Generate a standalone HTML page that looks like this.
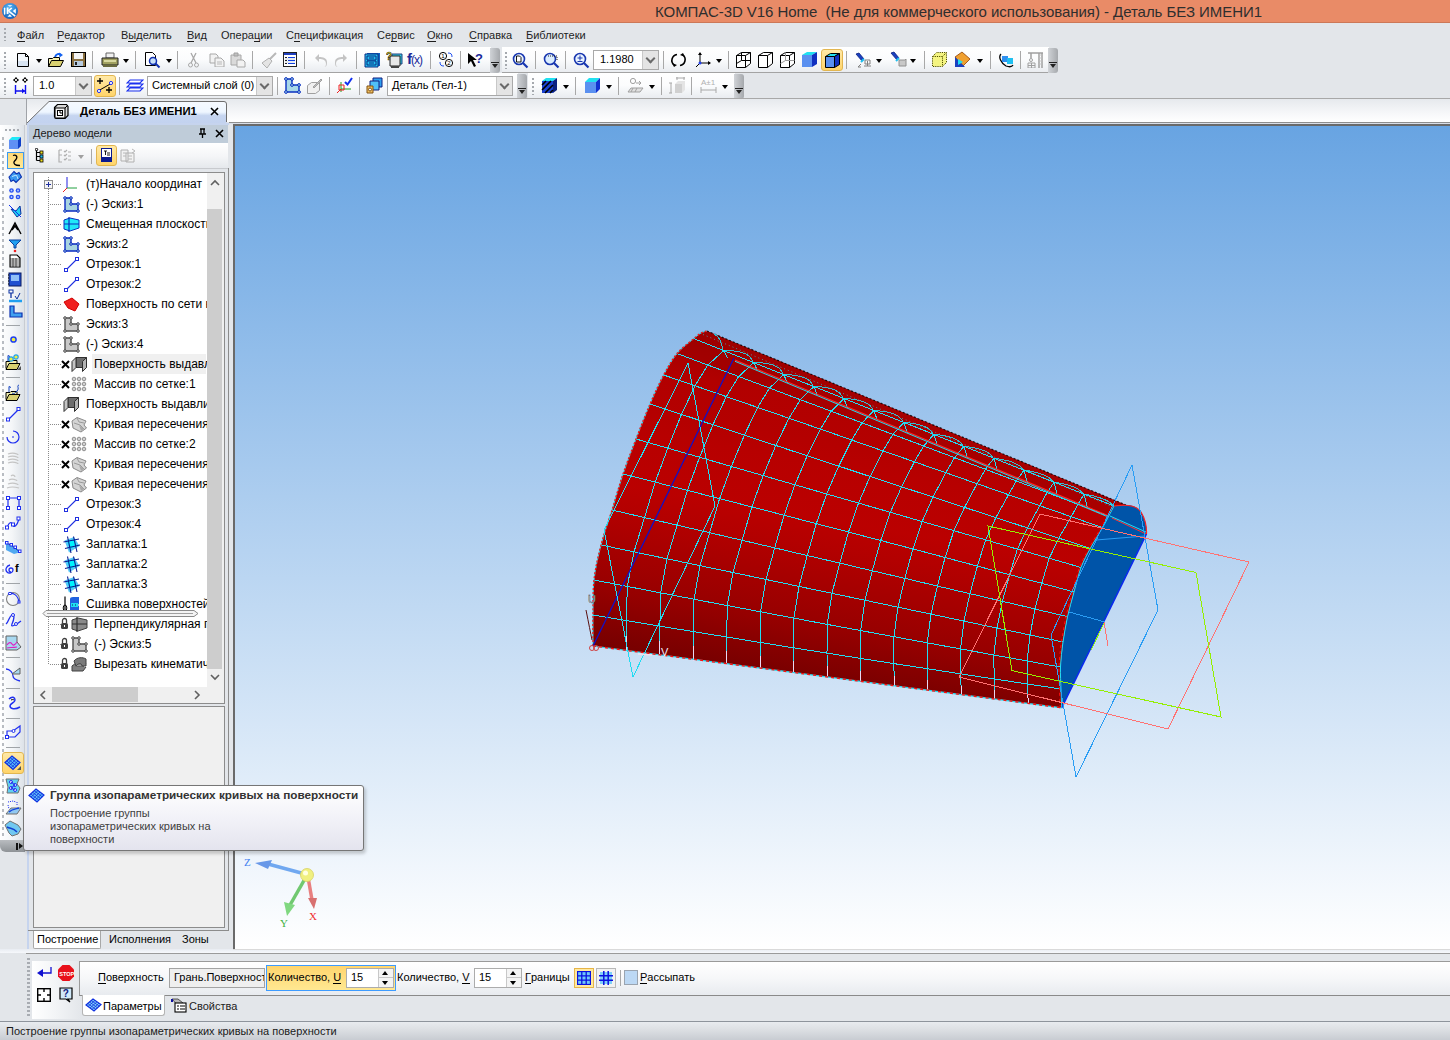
<!DOCTYPE html>
<html><head><meta charset="utf-8">
<style>
*{margin:0;padding:0;box-sizing:border-box}
html,body{width:1450px;height:1040px;overflow:hidden;background:#E3E6EA;font-family:"Liberation Sans",sans-serif;font-size:11px;color:#000}
.a{position:absolute}
.t{position:absolute;white-space:nowrap;line-height:13px}
.m{position:absolute;top:29px;line-height:13px;font-size:11px;color:#1E1E1E;white-space:nowrap}
u{text-decoration:none;border-bottom:1px solid currentColor;display:inline-block;line-height:11px}
.sep{position:absolute;width:1px;height:18px;background:#A8A8A8}
.tb{position:absolute;height:26px;background:linear-gradient(#FFFFFF 0%,#FBFCFD 50%,#E9ECF0 100%);border-bottom:1px solid #A3A3A3}
.grip{position:absolute;width:2px;height:17px;background:repeating-linear-gradient(#A5A9AE 0 2px,transparent 2px 4px)}
.ovf{position:absolute;width:10px;background:linear-gradient(90deg,#D0D3D7,#A5A8AC);border-radius:0 3px 3px 0}
.dd{position:absolute;width:0;height:0;border-left:3.5px solid transparent;border-right:3.5px solid transparent;border-top:4px solid #000}
.combo{position:absolute;height:19px;background:#fff;border:1px solid #A9A9A9}
.cbtn{position:absolute;right:0;top:0;width:16px;height:17px;background:#E4E4E4;border-left:1px solid #C8C8C8}
.cbtn:after{content:"";position:absolute;left:4px;top:4px;width:5px;height:5px;border-right:2px solid #6A6A6A;border-bottom:2px solid #6A6A6A;transform:rotate(45deg)}
.sel{position:absolute;background:linear-gradient(#FFE9A8,#FFD46A);border:1px solid #E2B650;border-radius:3px}
.ti{position:absolute;left:86px;font-size:12px;line-height:14px;white-space:nowrap;color:#000}
.dot{position:absolute;height:1px;background:repeating-linear-gradient(90deg,#8A8A8A 0 1px,transparent 1px 2px)}
</style></head><body>
<!-- TITLE -->
<div class="a" style="left:0;top:0;width:1450px;height:23px;background:#E98B67"></div>
<div class="a" style="left:0;top:22px;width:1450px;height:1px;background:#CC7858"></div>
<svg class="a" style="left:0;top:0" width="22" height="22"><defs><radialGradient id="lg" cx="0.45" cy="0.3" r="0.75"><stop offset="0" stop-color="#58B8F8"/><stop offset="1" stop-color="#0E5CB8"/></radialGradient></defs><circle cx="10" cy="11" r="8" fill="url(#lg)"/><path d="M4.6 8.2v5.8" stroke="#fff" stroke-width="1.4" stroke-linecap="round"/><path d="M7.6 7.5v6.5" stroke="#fff" stroke-width="1.8"/><path d="M8 11.2L11.8 8" stroke="#fff" stroke-width="1.6"/><path d="M9 11.3L15.2 16.2" stroke="#fff" stroke-width="1.6"/><path d="M7.5 5.2h5l-2.5 1.6z" fill="#fff"/><path d="M15.8 8.5v5.2l-3-2.6z" fill="#fff"/><path d="M7.5 16.8h4.5l-2.2-2.6z" fill="#fff"/></svg>
<div class="t" style="left:655px;top:3px;font-size:15px;line-height:18px;color:#2E2E2E;letter-spacing:-0.05px">КОМПАС-3D V16 Home&nbsp; (Не для коммерческого использования) - Деталь БЕЗ ИМЕНИ1</div>
<!-- MENU -->
<div class="a" style="left:0;top:23px;width:1450px;height:24px;background:#E3E6EA"></div>
<div class="grip" style="left:4px;top:28px;height:13px"></div>
<div class="m" style="left:17px"><u>Ф</u>айл</div>
<div class="m" style="left:57px"><u>Р</u>едактор</div>
<div class="m" style="left:121px">В<u>ы</u>делить</div>
<div class="m" style="left:187px"><u>В</u>ид</div>
<div class="m" style="left:221px">Опера<u>ц</u>ии</div>
<div class="m" style="left:286px">С<u>п</u>ецификация</div>
<div class="m" style="left:377px">Се<u>р</u>вис</div>
<div class="m" style="left:427px"><u>О</u>кно</div>
<div class="m" style="left:469px"><u>С</u>правка</div>
<div class="m" style="left:526px"><u>Б</u>иблиотеки</div>
<!-- TOOLBAR ROW 1 -->
<div class="tb" style="left:0;top:47px;width:491px;border-radius:0 0 0 0"></div>
<div class="ovf" style="left:490px;top:48px;height:25px"></div>
<div class="dd" style="left:491.5px;top:64px;border-top-color:#222"></div><div class="a" style="left:491px;top:62px;width:8px;height:1px;background:#222"></div>
<div class="grip" style="left:4px;top:52px"></div>
<!-- new -->
<svg class="a" style="left:16px;top:52px" width="14" height="16"><path d="M1.5 1.5h8l3 3v10h-11z" fill="#F4F8FC" stroke="#000"/><path d="M9.5 1.5v3h3" fill="none" stroke="#000"/><path d="M2 9h10v5H2z" fill="#D8E4F2"/></svg>
<div class="dd" style="left:36px;top:59px"></div>
<!-- open -->
<svg class="a" style="left:47px;top:51px" width="17" height="17"><path d="M1.5 7.5h4l1-1h6v9h-11z" fill="#F4F0B0" stroke="#000"/><path d="M1.5 15.5l3-6h12l-3 6z" fill="#D8D070" stroke="#000"/><path d="M8 6c1-3 4-4 6-2" stroke="#1060F0" stroke-width="2" fill="none"/><path d="M12 1.5l4 2.5-3.5 2.5z" fill="#1060F0"/></svg>
<!-- save -->
<svg class="a" style="left:71px;top:52px" width="15" height="16"><rect x="0.5" y="0.5" width="14" height="14" fill="#8A7040" stroke="#000"/><rect x="3" y="1" width="9" height="6" fill="#F4F4F4"/><rect x="3" y="9" width="9" height="5" fill="#B8CCE0"/><rect x="4" y="10" width="2" height="3" fill="#222"/></svg>
<div class="sep" style="left:92px;top:51px"></div>
<!-- print -->
<svg class="a" style="left:101px;top:52px" width="18" height="16"><path d="M5 1h8v5H5z" fill="#F0F0F0" stroke="#666"/><path d="M1 6h16v7H1z" fill="#A0A060" stroke="#222"/><path d="M2 13h14v2H2z" fill="#6A6A40"/><rect x="3" y="8" width="12" height="2" fill="#D8D8A0"/></svg>
<div class="dd" style="left:123px;top:59px"></div>
<div class="sep" style="left:135px;top:51px"></div>
<!-- preview -->
<svg class="a" style="left:144px;top:51px" width="18" height="18"><path d="M1.5 1.5h7l3 3v10h-10z" fill="#fff" stroke="#000"/><circle cx="9" cy="10" r="3.5" fill="#C8E0F8" stroke="#1030B0" stroke-width="1.5"/><path d="M11.5 12.5l4 4" stroke="#1030B0" stroke-width="2"/></svg>
<div class="dd" style="left:166px;top:59px"></div>
<div class="sep" style="left:177px;top:51px"></div>
<!-- cut copy paste (gray) -->
<svg class="a" style="left:188px;top:52px" width="11" height="16"><path d="M3 1l5 10M8 1L3 11" stroke="#A8A8A8" stroke-width="1.3"/><circle cx="2.5" cy="13" r="2" fill="none" stroke="#A8A8A8"/><circle cx="8.5" cy="13" r="2" fill="none" stroke="#A8A8A8"/></svg>
<svg class="a" style="left:209px;top:53px" width="16" height="14"><path d="M1 1h6l2 2v7H1z" fill="#F2F2F2" stroke="#A8A8A8"/><path d="M6 5h6l3 3v6H6z" fill="#F2F2F2" stroke="#A8A8A8"/><path d="M8 9h5M8 11h5" stroke="#B8B8B8"/></svg>
<svg class="a" style="left:230px;top:52px" width="16" height="16"><path d="M1 3h10v10H1z" fill="#DADADA" stroke="#A8A8A8"/><path d="M4 1h4v3H4z" fill="#C0C0C0" stroke="#A0A0A0"/><path d="M7 8h6l2 2v5H7z" fill="#F2F2F2" stroke="#A8A8A8"/></svg>
<div class="sep" style="left:252px;top:51px"></div>
<svg class="a" style="left:260px;top:52px" width="17" height="17"><path d="M16 1l-6 6" stroke="#B8B8B8" stroke-width="2"/><path d="M9 6l3 3-5 7-5-5z" fill="#E4E4E4" stroke="#B0B0B0"/></svg>
<svg class="a" style="left:283px;top:52px" width="14" height="16"><rect x="0.5" y="0.5" width="13" height="14" fill="#fff" stroke="#222"/><rect x="1" y="1" width="12" height="2" fill="#2040C0"/><path d="M2 5.5h2M2 8.5h2M2 11.5h2" stroke="#222"/><path d="M5 5.5h7M5 8.5h7M5 11.5h7" stroke="#1040E0"/><path d="M2 7h10M2 10h10" stroke="#B0B8D0" stroke-width="0.6"/></svg>
<div class="sep" style="left:304px;top:51px"></div>
<svg class="a" style="left:314px;top:53px" width="14" height="15"><path d="M5 1L1 5l4 4V6c4 0 7 1 7 5 0 2-1 3-2 3 3 0 3-3 3-5 0-4-4-5-8-5z" fill="#C4C4C4"/></svg>
<svg class="a" style="left:334px;top:53px" width="14" height="15"><path d="M9 1l4 4-4 4V6C5 6 2 7 2 11c0 2 1 3 2 3-3 0-3-3-3-5 0-4 4-5 8-5z" fill="#C4C4C4"/></svg>
<div class="sep" style="left:356px;top:51px"></div>
<svg class="a" style="left:364px;top:52px" width="17" height="16"><path d="M3 1h13v13H3z" fill="#1060C0"/><path d="M1 2h13v13H1z" fill="#20C0F0" stroke="#0A2A80"/><path d="M3 4h9v4H3zM3 9h9v4H3z" fill="none" stroke="#0A2A80"/><path d="M5 6h5M5 11h5" stroke="#0A2A80"/></svg>
<svg class="a" style="left:386px;top:51px" width="17" height="18"><path d="M6 3h10v10H6z" fill="#30C8E0" stroke="#204080"/><path d="M4 5h10v10H4z" fill="#E8E8E8" stroke="#222"/><path d="M5 15h8v2H5z" fill="#444"/><text x="0" y="9" font-size="10" font-weight="bold" fill="#F0E000" stroke="#222" stroke-width="0.6" font-family="Liberation Sans">?</text></svg>
<div class="t" style="left:407px;top:50px;font-size:15px;line-height:18px;color:#1A2A9A;font-weight:bold;letter-spacing:-1px">f<span style="font-weight:normal;font-size:12px">(x)</span></div>
<div class="sep" style="left:430px;top:51px"></div>
<svg class="a" style="left:438px;top:51px" width="17" height="18"><circle cx="5" cy="5" r="3.6" fill="#fff" stroke="#000"/><circle cx="11" cy="12" r="3.6" fill="#fff" stroke="#000"/><text x="3.3" y="7.2" font-size="6" font-family="Liberation Sans">1</text><text x="9.3" y="14.2" font-size="6" font-family="Liberation Sans">2</text><path d="M10 2c3 0 4 1 4 4M2 11c0 3 1 4 4 4" stroke="#2050F0" fill="none"/></svg>
<div class="sep" style="left:460px;top:51px"></div>
<svg class="a" style="left:467px;top:52px" width="18" height="17"><path d="M1 1v11l3-3 3 6 2-1-3-6h4z" fill="#000"/><text x="8" y="11" font-size="13" font-weight="bold" fill="#1A2A9A" font-family="Liberation Sans">?</text></svg>

<!-- toolbar B -->
<div class="tb" style="left:502px;top:47px;width:547px"></div>
<div class="ovf" style="left:1048px;top:48px;height:25px"></div>
<div class="dd" style="left:1050px;top:64px;border-top-color:#222"></div><div class="a" style="left:1049px;top:62px;width:8px;height:1px;background:#222"></div>
<div class="grip" style="left:505px;top:52px"></div>
<svg class="a" style="left:512px;top:52px" width="17" height="17"><circle cx="7" cy="7" r="5.5" fill="#EAF4FF" stroke="#1A38B0" stroke-width="1.6"/><path d="M4.5 4h3l1.5 1.5V10h-4.5z" fill="#fff" stroke="#000" stroke-width="0.9"/><path d="M11 11l4.5 4.5" stroke="#1A38B0" stroke-width="2.2"/></svg>
<div class="sep" style="left:535px;top:51px"></div>
<svg class="a" style="left:543px;top:52px" width="17" height="17"><circle cx="7" cy="7" r="5.5" fill="#DCEEFF" stroke="#1A38B0" stroke-width="1.6"/><path d="M5 4h9v5" stroke="#222" stroke-dasharray="1 1" fill="none"/><path d="M11 11l4.5 4.5" stroke="#1A38B0" stroke-width="2.2"/></svg>
<div class="sep" style="left:565px;top:51px"></div>
<svg class="a" style="left:573px;top:52px" width="17" height="17"><circle cx="7" cy="7" r="5.5" fill="#EAF4FF" stroke="#1A38B0" stroke-width="1.6"/><path d="M4.5 6h5M7 3.5v5M4.5 9.5h5" stroke="#1A38B0"/><path d="M11 11l4.5 4.5" stroke="#1A38B0" stroke-width="2.2"/></svg>
<div class="combo" style="left:593px;top:50px;width:66px;height:20px"><div class="t" style="left:6px;top:2px;font-size:11px">1.1980</div><div class="cbtn" style="height:18px"></div></div>
<div class="sep" style="left:663px;top:51px"></div>
<svg class="a" style="left:670px;top:52px" width="17" height="16"><path d="M7 2.5A6 6 0 0 0 4 13" stroke="#000" stroke-width="1.6" fill="none"/><path d="M10 13.5A6 6 0 0 0 13 3" stroke="#000" stroke-width="1.6" fill="none"/><path d="M2 11l2 4 3-2z M15 5l-2-4-3 2z" fill="#000"/></svg>
<svg class="a" style="left:695px;top:51px" width="17" height="17"><path d="M5 2v10h10" stroke="#000" fill="none"/><path d="M5 12l-4 4" stroke="#000"/><path d="M3 4l2-3 2 3zM13 10l3 2-3 2z" fill="#000"/><circle cx="5" cy="12" r="1.5" fill="#2040F0"/></svg>
<div class="dd" style="left:716px;top:59px"></div>
<div class="sep" style="left:728px;top:51px"></div>
<svg class="a" style="left:735px;top:51px" width="17" height="18"><path d="M1.5 4.5l5-3h9v11l-5 4h-9z M1.5 4.5h9v12 M10.5 4.5l5-3" fill="#fff" stroke="#000"/><path d="M1.5 12.5l5-3v-8 M6.5 9.5h9" stroke="#000" fill="none"/></svg>
<svg class="a" style="left:757px;top:51px" width="17" height="18"><path d="M1.5 4.5l5-3h9v11l-5 4h-9z" fill="#fff" stroke="#000"/><path d="M1.5 4.5h9v12M10.5 4.5l5-3" stroke="#000" fill="none"/></svg>
<svg class="a" style="left:779px;top:51px" width="17" height="18"><path d="M1.5 4.5l5-3h9v11l-5 4h-9z" fill="#fff" stroke="#000"/><path d="M1.5 4.5h9v12M10.5 4.5l5-3" stroke="#000" fill="none"/><path d="M6.5 1.5v8l-5 3M6.5 9.5h9" stroke="#999" fill="none"/></svg>
<svg class="a" style="left:801px;top:51px" width="17" height="18"><path d="M1 4l5-3h10l-5 3z" fill="#20E0F0"/><path d="M1 4h10v12H1z" fill="#5A90F0"/><path d="M11 4l5-3v12l-5 3z" fill="#1030C0"/></svg>
<div class="sel" style="left:821px;top:49px;width:22px;height:22px"></div>
<svg class="a" style="left:824px;top:52px" width="17" height="17"><path d="M1.5 4.5l5-3h9l-5 3z" fill="#20E0F0" stroke="#000"/><path d="M1.5 4.5h9v11h-9z" fill="#5A90F0" stroke="#000"/><path d="M10.5 4.5l5-3v11l-5 3z" fill="#1030C0" stroke="#000"/></svg>
<div class="sep" style="left:846px;top:51px"></div>
<svg class="a" style="left:855px;top:52px" width="17" height="17"><path d="M1 2l3-1 5 6-2 2z" fill="#1A40C0" stroke="#082080" stroke-width="0.8"/><path d="M6 10l3-3" stroke="#20C0F0" stroke-width="2"/><path d="M9 14h7M12.5 9v5M10 8h5v4h-5z" stroke="#808080" fill="none"/><path d="M6 12l-3 3h3" stroke="#808080" fill="none"/></svg>
<div class="dd" style="left:876px;top:59px"></div>
<svg class="a" style="left:890px;top:51px" width="17" height="17"><path d="M1 2l3-1 5 6-2 2z" fill="#1A40C0" stroke="#082080" stroke-width="0.8"/><path d="M6 10l3-3" stroke="#20C0F0" stroke-width="2"/><path d="M9 9h6l1-1v7H9z" fill="#C8C8C8" stroke="#909090"/></svg>
<div class="dd" style="left:910px;top:59px"></div>
<div class="sep" style="left:924px;top:51px"></div>
<svg class="a" style="left:931px;top:51px" width="17" height="17"><path d="M1.5 5.5l4-4h10v10l-4 4h-10z" fill="#F4F480" stroke="#505000" stroke-dasharray="1.2 1"/><path d="M1.5 5.5h10v10M11.5 5.5l4-4" fill="none" stroke="#505000" stroke-dasharray="1.2 1"/></svg>
<svg class="a" style="left:954px;top:51px" width="17" height="17"><path d="M1 6l7-5 8 7-7 7z" fill="#F0A030" stroke="#904000" stroke-width="0.8"/><path d="M1 6v10h10z" fill="#1A40C0"/><path d="M4 8l5 3-5 3z" fill="#20E0F0"/></svg>
<div class="dd" style="left:977px;top:59px"></div>
<div class="sep" style="left:990px;top:51px"></div>
<svg class="a" style="left:998px;top:52px" width="17" height="16"><path d="M3 2c-3 3 0 9 5 12 3 1 6 1 7-1" stroke="#000" stroke-width="1.3" fill="none"/><path d="M4 4h6v6H4z" fill="#3090F0"/><path d="M9 6h6v6H9z" fill="#20C0F0"/></svg>
<div class="sep" style="left:1020px;top:51px"></div>
<svg class="a" style="left:1027px;top:52px" width="17" height="16"><path d="M1 1h15M4 1v5M12 1v15M15 1v15" stroke="#A0A0A0" stroke-width="1.5" fill="none"/><path d="M12.5 3h2M12.5 6h2M12.5 9h2M12.5 12h2" stroke="#C8C8C8"/><path d="M1 11h7v5H1zM4.5 11v5M1 13.5h7" stroke="#A0A0A0" fill="none"/><circle cx="4" cy="8" r="1.5" fill="none" stroke="#A0A0A0"/></svg>

<!-- TOOLBAR ROW 2 -->
<div class="tb" style="left:0;top:73px;width:518px"></div>
<div class="ovf" style="left:517px;top:74px;height:25px"></div>
<div class="dd" style="left:518.5px;top:90px;border-top-color:#222"></div><div class="a" style="left:518px;top:88px;width:8px;height:1px;background:#222"></div>
<div class="grip" style="left:4px;top:78px"></div>
<svg class="a" style="left:12px;top:76px" width="18" height="19"><path d="M1 4h6M4 1v6M10 4h6M13 1v6" stroke="#000"/><circle cx="4" cy="4" r="1.6" fill="#fff" stroke="#000"/><circle cx="13" cy="4" r="1.6" fill="#fff" stroke="#000"/><path d="M3.5 9v9M13.5 9v9M4 15h9" stroke="#1010F0" stroke-width="1.4"/><path d="M13 15l-3-2.5v5z" fill="#1010F0"/></svg>
<div class="combo" style="left:33px;top:76px;width:59px;height:20px"><div class="t" style="left:5px;top:2px;font-size:11px">1.0</div><div class="cbtn" style="height:18px"></div></div>
<div class="sel" style="left:94px;top:75px;width:22px;height:22px"></div>
<svg class="a" style="left:96px;top:77px" width="18" height="18"><path d="M2 14l14-8" stroke="#000"/><path d="M1 4h6M4 1v6M10 13h6M13 10v6" stroke="#000" stroke-width="1.3"/><circle cx="3" cy="14" r="1.6" fill="#fff" stroke="#2030F0"/><circle cx="15" cy="6" r="1.6" fill="#fff" stroke="#2030F0"/></svg>
<div class="sep" style="left:119px;top:77px"></div>
<svg class="a" style="left:126px;top:78px" width="18" height="15"><path d="M4 2h13l-3 3H1z M4 6h13l-3 3H1z M4 10h13l-3 3H1z" fill="none" stroke="#1A30F0" stroke-width="1.2"/></svg>
<div class="combo" style="left:147px;top:76px;width:126px;height:20px"><div class="t" style="left:4px;top:2px;font-size:11px">Системный слой (0)</div><div class="cbtn" style="height:18px"></div></div>
<div class="sep" style="left:277px;top:77px"></div>
<svg class="a" style="left:284px;top:77px" width="17" height="17"><path d="M2 2h6v6h7v7H2z" fill="#A8D8E8" stroke="#0A30C0" stroke-width="1.4"/><circle cx="2" cy="2" r="1.4" fill="#A8D8E8" stroke="#0A30C0"/><circle cx="8" cy="2" r="1.4" fill="#A8D8E8" stroke="#0A30C0"/><circle cx="8" cy="8" r="1.4" fill="#A8D8E8" stroke="#0A30C0"/><circle cx="15" cy="8" r="1.4" fill="#A8D8E8" stroke="#0A30C0"/><circle cx="15" cy="15" r="1.4" fill="#A8D8E8" stroke="#0A30C0"/><circle cx="2" cy="15" r="1.4" fill="#A8D8E8" stroke="#0A30C0"/></svg>
<svg class="a" style="left:306px;top:77px" width="17" height="17"><path d="M1.5 8.5l4-3h8v8l-4 3h-8z" fill="#F0F0F0" stroke="#A0A0A0"/><path d="M7 10l8-8 1 1-8 8z" fill="#C0C0C0" stroke="#A0A0A0"/></svg>
<div class="sep" style="left:329px;top:77px"></div>
<svg class="a" style="left:336px;top:77px" width="17" height="17"><path d="M5 15V5" stroke="#20A020"/><path d="M5 12h10" stroke="#20A020"/><path d="M5 12l-4 4" stroke="#F02020"/><path d="M3 8h5v5H3z" fill="none" stroke="#F02020"/><path d="M9 5l2.5 2.5L16 1" stroke="#1030F0" stroke-width="2" fill="none"/></svg>
<div class="sep" style="left:359px;top:77px"></div>
<svg class="a" style="left:366px;top:77px" width="18" height="17"><path d="M7 1h9v9H7z" fill="#30A0F0" stroke="#102080"/><path d="M4 4h9v9H4z" fill="#50C0F8" stroke="#102080"/><path d="M1 9h6v7H1z" fill="#F0C060" stroke="#805010"/><circle cx="4" cy="12.5" r="1.5" fill="#fff" stroke="#805010"/></svg>
<div class="combo" style="left:387px;top:76px;width:126px;height:20px"><div class="t" style="left:4px;top:2px;font-size:11px">Деталь (Тел-1)</div><div class="cbtn" style="height:18px"></div></div>

<!-- toolbar D -->
<div class="tb" style="left:528px;top:73px;width:207px"></div>
<div class="ovf" style="left:734px;top:74px;height:25px"></div>
<div class="dd" style="left:735.5px;top:90px;border-top-color:#222"></div><div class="a" style="left:735px;top:88px;width:8px;height:1px;background:#222"></div>
<div class="grip" style="left:532px;top:78px"></div>
<svg class="a" style="left:541px;top:77px" width="17" height="17"><path d="M1 4l4-3h11l-4 3z" fill="#20E0F0"/><path d="M1 4h11v12H1z" fill="#1A40D0"/><path d="M12 4l4-3v12l-4 3z" fill="#0A2080"/><path d="M1 8l4-4M1 13l9-9M4 16l8-8M9 16l3-3" stroke="#000" stroke-width="1.6"/></svg>
<div class="dd" style="left:563px;top:85px"></div>
<div class="sep" style="left:575px;top:77px"></div>
<svg class="a" style="left:584px;top:77px" width="17" height="17"><path d="M1 5l4-4h11l-4 4z" fill="#20E0F0"/><path d="M1 5h11v11H1z" fill="#5A90F0"/><path d="M12 5l4-4v11l-4 4z" fill="#1030D0"/></svg>
<div class="dd" style="left:606px;top:85px"></div>
<div class="sep" style="left:618px;top:77px"></div>
<svg class="a" style="left:627px;top:77px" width="17" height="17"><circle cx="6" cy="4" r="2.6" fill="none" stroke="#A0A0A0"/><path d="M9 6h5l-2-2M14 6l-2 2" stroke="#A0A0A0" fill="none"/><path d="M1 15l3-4h12l-3 4z" fill="#E0E0E0" stroke="#A0A0A0"/><path d="M6 11l-2 4M10 11l-2 4" stroke="#A0A0A0"/></svg>
<div class="dd" style="left:649px;top:85px"></div>
<div class="sep" style="left:661px;top:77px"></div>
<svg class="a" style="left:669px;top:77px" width="17" height="17"><path d="M6 7h7v9H6z" fill="#D0D0D0"/><path d="M6 7l3-3h7l-3 3z M13 7l3-3v9l-3 3z" fill="#E4E4E4"/><path d="M7 1h9M8 0v3M15 0v3M2 6v10M0 6h3M0 16h3" stroke="#A8A8A8"/></svg>
<div class="sep" style="left:691px;top:77px"></div>
<svg class="a" style="left:700px;top:77px" width="17" height="17"><text x="1" y="8" font-size="8" fill="#B0B0B0" font-family="Liberation Sans">A±1</text><path d="M1 13h15M1 10v6M16 10v6" stroke="#A8A8A8"/></svg>
<div class="dd" style="left:722px;top:85px"></div>
<!-- TAB BAR AREA -->
<div class="a" style="left:0;top:99px;width:1450px;height:26px;background:#E3E6EA"></div>
<div class="a" style="left:0;top:98px;width:1450px;height:1px;background:#A8A8A8"></div>
<div class="a" style="left:27px;top:99px;width:1423px;height:23px;background:linear-gradient(#E6E9ED,#F6F7F9 60%,#FFFFFF)"></div>
<div class="a" style="left:26px;top:99px;width:1px;height:26px;background:#A0A3A8"></div>
<div class="a" style="left:229px;top:122px;width:1221px;height:1px;background:#8E8E8E"></div>
<div class="a" style="left:229px;top:123px;width:1221px;height:1px;background:#D8DEE8"></div>
<!-- tab -->
<svg class="a" style="left:27px;top:100px" width="202" height="25"><defs><linearGradient id="tg" x1="0" y1="0" x2="0" y2="1"><stop offset="0" stop-color="#F6FAFF"/><stop offset="0.45" stop-color="#EEF6FF"/><stop offset="0.6" stop-color="#C6D5F0"/><stop offset="1" stop-color="#C2D2EF"/></linearGradient></defs><path d="M0 25V23L22 1.5H197Q199.5 1.5 199.5 4V25Z" fill="url(#tg)"/><path d="M0 23L22 1.5H197Q199.5 1.5 199.5 4V22" fill="none" stroke="#6E6E6E" stroke-width="1"/></svg>
<svg class="a" style="left:53px;top:103px" width="16" height="17"><path d="M1.5 4.5l3-3h9l1.5 2v9l-3 3h-9l-1.5-2z" fill="#D8D8D8" stroke="#000" stroke-width="1.2"/><path d="M2 5h10v10H2z" fill="#F4F4F4" stroke="#000" stroke-width="1.1"/><path d="M12 5l3-3" stroke="#000"/><rect x="4.5" y="7.5" width="5" height="5" fill="#fff" stroke="#000"/><path d="M6 9h2v2" stroke="#000" fill="none"/></svg>
<div class="t" style="left:80px;top:105px;font-size:11.3px;font-weight:bold;color:#000">Деталь БЕЗ ИМЕНИ1</div>
<svg class="a" style="left:210px;top:107px" width="9" height="9"><path d="M1 1l7 7M8 1L1 8" stroke="#000" stroke-width="1.6"/></svg>
<!-- LEFT VERTICAL TOOLBAR -->
<div class="a" style="left:0;top:125px;width:25px;height:715px;background:linear-gradient(90deg,#FFFFFF,#F4F6F8 50%,#DDE2E8);border-right:1px solid #C8CCD2"></div>
<div class="a" style="left:0;top:840px;width:25px;height:12px;background:linear-gradient(#B9BCC0,#8E9296);border-radius:0 0 0 6px"></div>
<div class="a" style="left:16px;top:843px;width:2px;height:7px;background:#111"></div>
<div class="a" style="left:19px;top:843px;width:0;height:0;border-top:3.5px solid transparent;border-bottom:3.5px solid transparent;border-left:4px solid #111"></div>
<div class="a" style="left:2px;top:137px;width:2px;height:700px;background:repeating-linear-gradient(#B8BCC2 0 3px,transparent 3px 6px)"></div>
<div class="a" style="left:5px;top:129px;width:15px;height:2px;background:repeating-linear-gradient(90deg,#A8ACB2 0 2px,transparent 2px 4px)"></div>
<svg class="a" style="left:8px;top:136px" width="14" height="14"><path d="M1 4l3-3h9l-3 3z" fill="#20E8F8"/><path d="M1 4h9v9H1z" fill="#6090F4"/><path d="M10 4l3-3v9l-3 3z" fill="#1040C8"/></svg>
<div class="a" style="left:7px;top:152px;width:17px;height:17px;background:linear-gradient(#FFD978,#FFE896);border:1px solid #3C9AF0"></div>
<svg class="a" style="left:9px;top:154px" width="13" height="13"><path d="M4 1.5c3-1 5 1 3 4-2 2-3 3-1 5 1 1 3 1 5 1" stroke="#000" stroke-width="1.3" fill="none"/></svg>
<svg class="a" style="left:8px;top:170px" width="14" height="14"><path d="M1 7L6 1.5 8.5 4 11 2.5 13.5 7 8 12.5 5.5 10 3 11.5Z" fill="#3A98F0" stroke="#0A30B0" stroke-width="1.1"/><path d="M4 6.5l4.5-1.5 1.5 4" stroke="#C0E8FF" fill="none"/></svg>
<svg class="a" style="left:9px;top:188px" width="12" height="12"><g fill="#2850F0"><circle cx="2.5" cy="2.5" r="2.3"/><circle cx="9" cy="2.5" r="2.3"/><circle cx="2.5" cy="9" r="2.3"/><circle cx="9" cy="9" r="2.3"/></g><g fill="#B8D0FF"><circle cx="2.5" cy="2.5" r="0.9"/><circle cx="9" cy="2.5" r="0.9"/><circle cx="2.5" cy="9" r="0.9"/><circle cx="9" cy="9" r="0.9"/></g></svg>
<svg class="a" style="left:8px;top:204px" width="14" height="14"><path d="M3 5l5 2 4-5 1 8-4 3z" fill="#20D0F0" stroke="#0A30A0"/><path d="M1 1l12 12" stroke="#1030F0"/></svg>
<svg class="a" style="left:8px;top:221px" width="14" height="14"><path d="M1 13L7 2l6 11M4 9l3-4 3 4" stroke="#000" stroke-width="1.4" fill="none"/></svg>
<svg class="a" style="left:8px;top:238px" width="14" height="15"><path d="M1 2h12L8 7v3H6V7z" fill="#20A0F0" stroke="#0A40A0"/><circle cx="7" cy="13" r="1.3" fill="#F02020"/></svg>
<svg class="a" style="left:9px;top:254px" width="12" height="14"><path d="M1 1h7l3 3v9H1z" fill="#fff" stroke="#000" stroke-width="1.1"/><path d="M1 5h10M1 7h10M1 9h10M1 11h10M4 4v9M7 4v9" stroke="#000" stroke-width="0.6"/></svg>
<svg class="a" style="left:8px;top:272px" width="14" height="15"><rect x="1" y="1" width="12" height="13" fill="#2050D0" stroke="#0A1A60"/><rect x="3" y="3" width="8" height="6" fill="#90C0F8"/><path d="M0 3h1M0 6h1M0 9h1M0 12h1" stroke="#000"/></svg>
<svg class="a" style="left:8px;top:289px" width="15" height="15"><path d="M3 1v8" stroke="#0A30A0" stroke-width="1.3"/><rect x="1" y="1" width="4" height="3" fill="#fff" stroke="#0A30A0"/><path d="M1 12h13" stroke="#20A0F0" stroke-width="2.5"/><path d="M7 7l2 3 3-6" stroke="#0A30A0" fill="none"/></svg>
<svg class="a" style="left:8px;top:305px" width="15" height="15"><path d="M2 1v11h12v-4H6V1z" fill="#40A0F0" stroke="#0A30B0" stroke-width="1.2"/></svg>
<div class="a" style="left:6px;top:325px;width:14px;height:1px;background:#A0A4A8"></div>
<svg class="a" style="left:9px;top:335px" width="9" height="9"><circle cx="4.5" cy="4.5" r="2.6" fill="#F0F040" stroke="#2040F0" stroke-width="1.5"/></svg>
<svg class="a" style="left:4px;top:353px" width="18" height="18"><path d="M2 8.5h4l1-1h6v8H2z" fill="#F4F0B0" stroke="#000"/><path d="M2 16.5l3-6h11l-3 6z" fill="#D8D070" stroke="#000"/><circle cx="7" cy="6" r="2.2" fill="#F0F040" stroke="#20A0F0" stroke-width="1.2"/><circle cx="12" cy="4" r="2.2" fill="#F0F040" stroke="#20A0F0" stroke-width="1.2"/><path d="M4 8V2.5l2 1" stroke="#1040C0" fill="none"/><path d="M17 17h-4l4-4z" fill="#555"/></svg>
<div class="a" style="left:6px;top:377px;width:14px;height:1px;background:#A0A4A8"></div>
<svg class="a" style="left:4px;top:384px" width="18" height="17"><path d="M2 8.5h4l1-1h6v8H2z" fill="#F4F0B0" stroke="#000"/><path d="M2 16.5l3-6h11l-3 6z" fill="#D8D070" stroke="#000"/><path d="M5 8V2.5l2 1" stroke="#1040C0" fill="none"/><path d="M15 1c-3 1 1 3-2 6s-3 3-5 2" stroke="#1040C0" fill="none"/></svg>
<svg class="a" style="left:6px;top:407px" width="15" height="15"><path d="M2 13L13 2" stroke="#2030F0" stroke-width="1.2"/><rect x="0.5" y="11" width="3" height="3" fill="#fff" stroke="#2030F0"/><rect x="11" y="0.5" width="3" height="3" fill="#fff" stroke="#2030F0"/></svg>
<svg class="a" style="left:5px;top:429px" width="16" height="16"><path d="M8 2a6 6 0 1 1-6 6" stroke="#2030F0" stroke-width="1.2" fill="none"/><path d="M8 7l1 1-1 1-1-1z" fill="#2030F0"/></svg>
<svg class="a" style="left:6px;top:451px" width="14" height="16"><path d="M2 3c5-2 10 0 10 1M2 6c5-2 10 0 10 1M2 9c5-2 10 0 10 1M2 12c5-2 10 0 10 1" stroke="#C4C4C4" stroke-width="1.2" fill="none"/></svg>
<svg class="a" style="left:6px;top:473px" width="14" height="16"><path d="M5 3c2-2 4 0 4 1M3 7c3-2 8 0 8 1M2 11c5-2 10 0 10 1M1 15c5-2 12 0 12 0" stroke="#C4C4C4" stroke-width="1.2" fill="none"/></svg>
<svg class="a" style="left:6px;top:496px" width="15" height="14"><path d="M2 13V2h11v11" stroke="#2030F0" stroke-width="1.2" fill="none"/><rect x="0.5" y="0.5" width="3" height="3" fill="#fff" stroke="#2030F0"/><rect x="11.5" y="0.5" width="3" height="3" fill="#fff" stroke="#2030F0"/><rect x="0.5" y="10.5" width="3" height="3" fill="#fff" stroke="#2030F0"/><rect x="11.5" y="10.5" width="3" height="3" fill="#fff" stroke="#2030F0"/></svg>
<svg class="a" style="left:5px;top:516px" width="16" height="14"><path d="M2 12c2-7 5-6 6-3s4 1 6-6" stroke="#2030F0" stroke-width="1.2" fill="none"/><rect x="0.5" y="10" width="3" height="3" fill="#fff" stroke="#2030F0"/><rect x="6.5" y="7" width="3" height="3" fill="#fff" stroke="#2030F0"/><rect x="12" y="1" width="3" height="3" fill="#fff" stroke="#2030F0"/></svg>
<svg class="a" style="left:5px;top:540px" width="17" height="15"><path d="M1 3l4 2 4 2 7 5-7 2L1 10z" fill="#50A8F0"/><path d="M1 3l5 2 4 3 5 4" stroke="#0A30A0" fill="none"/><rect x="0.5" y="1.5" width="2.5" height="2.5" fill="#fff" stroke="#2030F0"/><rect x="5" y="3.5" width="2.5" height="2.5" fill="#fff" stroke="#2030F0"/><rect x="9" y="6" width="2.5" height="2.5" fill="#fff" stroke="#2030F0"/><rect x="13.5" y="10" width="2.5" height="2.5" fill="#fff" stroke="#2030F0"/></svg>
<svg class="a" style="left:5px;top:562px" width="17" height="17"><path d="M6 10a2 2 0 1 1 2-2c0 3-4 4-6 2s-1-6 3-7" stroke="#2030F0" stroke-width="1.3" fill="none"/><text x="10" y="10" font-size="11" font-weight="bold" font-family="Liberation Sans" fill="#000">f</text></svg>
<div class="a" style="left:6px;top:583px;width:14px;height:1px;background:#A0A4A8"></div>
<svg class="a" style="left:5px;top:590px" width="17" height="17"><circle cx="8" cy="9" r="6.5" fill="none" stroke="#808080" stroke-width="1.1"/><path d="M3 4c5-2 10 1 11 8" stroke="#2030F0" stroke-width="1.2" fill="none"/><rect x="4" y="2.5" width="2" height="2" fill="#fff" stroke="#2030F0"/><rect x="13" y="11" width="2" height="2" fill="#fff" stroke="#2030F0"/></svg>
<svg class="a" style="left:5px;top:612px" width="17" height="16"><path d="M1 12c3-2 3-8 6-9s2 5 0 9 4 1 9-3" stroke="#2030F0" stroke-width="1.3" fill="none"/><circle cx="8" cy="3" r="1.5" fill="#fff" stroke="#2030F0"/><circle cx="11" cy="12" r="1.5" fill="#fff" stroke="#2030F0"/></svg>
<svg class="a" style="left:5px;top:635px" width="17" height="16"><path d="M1 1h11v6l4 5-4 3H1z" fill="#A8D8F0" stroke="#606060"/><path d="M2 10c2-3 4-3 5-1s3 1 5-2M2 13c2-1 5 0 10-1" stroke="#E020C0" stroke-width="1.2" fill="none"/></svg>
<div class="a" style="left:6px;top:657px;width:14px;height:1px;background:#A0A4A8"></div>
<svg class="a" style="left:5px;top:665px" width="17" height="17"><path d="M1 4c4 0 7 4 7 7s3 4 7 5" stroke="#2030F0" stroke-width="1.3" fill="none"/><path d="M7 9l8-6v6z" fill="#A8D8F0" stroke="#606060"/></svg>
<div class="a" style="left:6px;top:688px;width:14px;height:1px;background:#A0A4A8"></div>
<svg class="a" style="left:5px;top:695px" width="17" height="17"><path d="M4 4c3-3 6-2 6 1s-5 3-5 6 5 4 10 1" stroke="#2030F0" stroke-width="1.5" fill="none"/><path d="M6 5c2-1 3 0 3 0" stroke="#000" fill="none"/></svg>
<div class="a" style="left:6px;top:718px;width:14px;height:1px;background:#A0A4A8"></div>
<svg class="a" style="left:5px;top:723px" width="17" height="17"><path d="M2 14V8h6l7-5v6l-5 5z" fill="none" stroke="#2030F0" stroke-width="1.2"/><rect x="0.5" y="12.5" width="3" height="3" fill="#fff" stroke="#2030F0"/><circle cx="8.5" cy="8" r="1.5" fill="#fff" stroke="#2030F0"/></svg>
<div class="a" style="left:6px;top:747px;width:14px;height:1px;background:#A0A4A8"></div>
<div class="sel" style="left:2px;top:752px;width:22px;height:22px"></div>
<svg class="a" style="left:4px;top:755px" width="18" height="16"><path d="M1 7.5L8 1L16 7.5L9 14.5Z" fill="#58B8F8" stroke="#1030E0" stroke-width="1.2"/><path d="M2.8 5.9L10.8 12.8M3.0 9.2L10.0 2.6M4.5 4.2L12.5 11.0M5.0 11.0L12.0 4.2M6.2 2.6L14.2 9.2M7.0 12.8L14.0 5.9" stroke="#1030E0" stroke-width="0.8"/><path d="M17 15h-4l4-4z" fill="#555"/></svg>
<svg class="a" style="left:5px;top:777px" width="17" height="17"><path d="M1 2h13l-2 5 3 4-2 5H2l1-6z" fill="#60D0F0" stroke="#707070"/><circle cx="6" cy="5" r="1.5" fill="#fff" stroke="#2030F0"/><circle cx="10" cy="8" r="1.5" fill="#fff" stroke="#2030F0"/><circle cx="6" cy="11" r="1.5" fill="#fff" stroke="#2030F0"/><circle cx="10" cy="13" r="1.5" fill="#fff" stroke="#2030F0"/><path d="M6 5l4 3-4 3 4 2" stroke="#2030F0" fill="none"/></svg>
<svg class="a" style="left:5px;top:799px" width="17" height="17"><path d="M3 3l5-1 3 1M3 6l1 4M12 3v4" stroke="#2030F0" stroke-dasharray="1 1" fill="none"/><path d="M1 15l5-6h10l-4 6z" fill="#90C8F0" stroke="#707070"/><path d="M4 13c3-3 6-3 10-4" stroke="#1040E0" stroke-width="1.3" fill="none"/></svg>
<svg class="a" style="left:4px;top:820px" width="18" height="17"><path d="M1 5l5-4 8 4 3 4-3 5-6 2-3-3z" fill="#70C8F0" stroke="#707070"/><path d="M3 7c4 2 6 1 10 5" stroke="#1040D0" stroke-width="1.6" fill="none"/></svg>
<!-- TREE PANEL -->
<div class="a" style="left:27px;top:124px;width:202px;height:826px;background:#E3E6EA"></div>
<div class="a" style="left:27px;top:124px;width:2px;height:826px;background:#C6D4EE"></div>
<div class="a" style="left:27px;top:123px;width:202px;height:2px;background:#C6D4EE"></div>
<div class="a" style="left:29px;top:125px;width:199px;height:18px;background:#BFCCD9"></div>
<div class="t" style="left:33px;top:127px;font-size:11px;color:#1A1A1A">Дерево модели</div>
<svg class="a" style="left:198px;top:128px" width="9" height="11"><path d="M2 1h5M3 1v5M6 1v5M1 6h7M4.5 6v4" stroke="#000" stroke-width="1.3"/></svg>
<svg class="a" style="left:215px;top:129px" width="9" height="9"><path d="M1 1l7 7M8 1L1 8" stroke="#000" stroke-width="1.6"/></svg>
<div class="a" style="left:29px;top:143px;width:199px;height:25px;background:linear-gradient(#FFFFFF,#F4F5F7 55%,#E5E8EC)"></div>
<svg class="a" style="left:35px;top:148px" width="12" height="15"><path d="M1.5 1.5v11M1.5 4.5h4M1.5 8.5h4M1.5 12.5h4" stroke="#000" stroke-width="1.2" fill="none"/><circle cx="1.5" cy="1.5" r="1.2" fill="#fff" stroke="#000"/><rect x="5" y="3" width="3" height="3" fill="#F0E020" stroke="#000" stroke-width="0.8"/><rect x="5" y="7" width="3" height="3" fill="#20C0F0" stroke="#000" stroke-width="0.8"/><rect x="5" y="11" width="3" height="3" fill="#F0E020" stroke="#000" stroke-width="0.8"/></svg>
<svg class="a" style="left:58px;top:149px" width="14" height="14"><path d="M1 1v12h3M1 1h3M1 6h3M6 2l1 1 2-2M6 6l1 1 2-2M6 10l1 1 2-2M10 3h3M10 7h3M10 11h3" stroke="#B0B0B0" stroke-width="1.2" fill="none"/></svg>
<div class="dd" style="left:78px;top:155px;border-top-color:#A0A0A0"></div>
<div class="a" style="left:91px;top:149px;width:1px;height:15px;background:#A8A8A8"></div>
<div class="sel" style="left:96px;top:145px;width:21px;height:21px"></div>
<svg class="a" style="left:101px;top:148px" width="11" height="15"><rect x="0.5" y="0.5" width="10" height="13" fill="#fff" stroke="#0A1A90"/><rect x="1" y="9" width="9" height="5" fill="#0A1A90"/><path d="M3 3h3M4.5 3v4M6 5h3M6 7h3" stroke="#000" stroke-width="0.9"/></svg>
<svg class="a" style="left:120px;top:148px" width="16" height="15"><path d="M1 2h7v11H1zM6 5h8v9H6z" fill="#F2F2F2" stroke="#B0B0B0"/><path d="M3 5h3M3 8h3M8 8h4M8 11h4M12 1l3 2-3 2" stroke="#B8B8B8" fill="none"/></svg>
<div class="a" style="left:28px;top:168px;width:201px;height:1px;background:#C8CACE"></div>
<div class="a" style="left:33px;top:172px;width:192px;height:532px;background:#fff;border:1px solid #8C8C8C"></div>
<div class="a" style="left:207px;top:173px;width:17px;height:530px;background:#F0F0F0"></div>
<div class="a" style="left:207px;top:209px;width:15px;height:460px;background:#CDCDCD"></div>
<svg class="a" style="left:210px;top:179px" width="10" height="7"><path d="M1 6l4-4 4 4" stroke="#606060" stroke-width="1.6" fill="none"/></svg>
<svg class="a" style="left:210px;top:674px" width="10" height="7"><path d="M1 1l4 4 4-4" stroke="#606060" stroke-width="1.6" fill="none"/></svg>
<div class="a" style="left:34px;top:687px;width:173px;height:16px;background:#F0F0F0"></div>
<div class="a" style="left:52px;top:687px;width:86px;height:15px;background:#CDCDCD"></div>
<svg class="a" style="left:39px;top:690px" width="7" height="10"><path d="M6 1L2 5l4 4" stroke="#606060" stroke-width="1.6" fill="none"/></svg>
<svg class="a" style="left:194px;top:690px" width="7" height="10"><path d="M1 1l4 4-4 4" stroke="#606060" stroke-width="1.6" fill="none"/></svg>
<div class="a" style="left:33px;top:706px;width:192px;height:222px;background:#F0F0F0;border:1px solid #8C8C8C"></div>
<div class="a" style="left:28px;top:930px;width:201px;height:1px;background:#8C8C8C"></div>
<div class="a" style="left:228px;top:168px;width:1px;height:763px;background:#8C8C8C"></div>
<div class="a" style="left:33px;top:931px;width:68px;height:18px;background:#fff;border:1px solid #A8A8A8;border-top:none;border-radius:0 0 2px 2px"></div>
<div class="t" style="left:37px;top:933px;font-size:11px">Построение</div>
<div class="t" style="left:109px;top:933px;font-size:11px">Исполнения</div>
<div class="t" style="left:182px;top:933px;font-size:11px">Зоны</div>
<div class="a" style="left:48px;top:177px;width:1px;height:488px;background:repeating-linear-gradient(#8A8A8A 0 1px,transparent 1px 2px)"></div>
<div class="a" style="left:44px;top:180px;width:9px;height:9px;background:#F4F4F4;border:1px solid #909090"></div>
<div class="a" style="left:46px;top:184px;width:5px;height:1px;background:#2030A0"></div>
<div class="a" style="left:48px;top:182px;width:1px;height:5px;background:#2030A0"></div>
<div class="dot" style="left:54px;top:184px;width:8px"></div>
<svg class="a" style="left:63px;top:176px" width="17" height="17"><path d="M4 1v11" stroke="#2020E0"/><path d="M4 12h10" stroke="#20A040"/><path d="M4 12l-4 4" stroke="#F02020"/></svg>
<div class="a" style="left:86px;top:176px;width:121px;height:16px;overflow:hidden"><div class="ti" style="left:0;top:1px">(т)Начало координат</div></div>
<div class="dot" style="left:50px;top:204px;width:12px"></div>
<svg class="a" style="left:63px;top:196px" width="17" height="17"><path d="M2 2h6v6h7v7H2z" fill="#A8D4E0" stroke="#0A2AC0" stroke-width="1.4"/><g fill="#A8D4E0" stroke="#0A2AC0"><circle cx="2" cy="2" r="1.3"/><circle cx="8" cy="2" r="1.3"/><circle cx="8" cy="8" r="1.3"/><circle cx="15" cy="8" r="1.3"/><circle cx="15" cy="15" r="1.3"/><circle cx="2" cy="15" r="1.3"/></g></svg>
<div class="a" style="left:86px;top:196px;width:121px;height:16px;overflow:hidden"><div class="ti" style="left:0;top:1px">(-) Эскиз:1</div></div>
<div class="dot" style="left:50px;top:224px;width:12px"></div>
<svg class="a" style="left:63px;top:216px" width="17" height="17"><path d="M1 4l6-2 9 2v8l-9 3-6-2z" fill="#20E8F8" stroke="#0A30C0"/><path d="M6 1v15M1 8l15 0" stroke="#0A30C0" stroke-width="1.2"/></svg>
<div class="a" style="left:86px;top:216px;width:121px;height:16px;overflow:hidden"><div class="ti" style="left:0;top:1px">Смещенная плоскость:1</div></div>
<div class="dot" style="left:50px;top:244px;width:12px"></div>
<svg class="a" style="left:63px;top:236px" width="17" height="17"><path d="M2 2h6v6h7v7H2z" fill="#A8D4E0" stroke="#0A2AC0" stroke-width="1.4"/><g fill="#A8D4E0" stroke="#0A2AC0"><circle cx="2" cy="2" r="1.3"/><circle cx="8" cy="2" r="1.3"/><circle cx="8" cy="8" r="1.3"/><circle cx="15" cy="8" r="1.3"/><circle cx="15" cy="15" r="1.3"/><circle cx="2" cy="15" r="1.3"/></g></svg>
<div class="a" style="left:86px;top:236px;width:121px;height:16px;overflow:hidden"><div class="ti" style="left:0;top:1px">Эскиз:2</div></div>
<div class="dot" style="left:50px;top:264px;width:12px"></div>
<svg class="a" style="left:63px;top:256px" width="17" height="17"><path d="M3 14L14 3" stroke="#2030E0" stroke-width="1.1"/><rect x="1.5" y="12.5" width="3" height="3" fill="#fff" stroke="#2030E0"/><rect x="12.5" y="1.5" width="3" height="3" fill="#fff" stroke="#2030E0"/></svg>
<div class="a" style="left:86px;top:256px;width:121px;height:16px;overflow:hidden"><div class="ti" style="left:0;top:1px">Отрезок:1</div></div>
<div class="dot" style="left:50px;top:284px;width:12px"></div>
<svg class="a" style="left:63px;top:276px" width="17" height="17"><path d="M3 14L14 3" stroke="#2030E0" stroke-width="1.1"/><rect x="1.5" y="12.5" width="3" height="3" fill="#fff" stroke="#2030E0"/><rect x="12.5" y="1.5" width="3" height="3" fill="#fff" stroke="#2030E0"/></svg>
<div class="a" style="left:86px;top:276px;width:121px;height:16px;overflow:hidden"><div class="ti" style="left:0;top:1px">Отрезок:2</div></div>
<div class="dot" style="left:50px;top:304px;width:12px"></div>
<svg class="a" style="left:63px;top:296px" width="17" height="17"><path d="M1 6l8-4 7 6-4 7-7-3z" fill="#F02020" stroke="#D00000"/></svg>
<div class="a" style="left:86px;top:296px;width:121px;height:16px;overflow:hidden"><div class="ti" style="left:0;top:1px">Поверхность по сети кривых:1</div></div>
<div class="dot" style="left:50px;top:324px;width:12px"></div>
<svg class="a" style="left:63px;top:316px" width="17" height="17"><path d="M2 2h6v6h7v7H2z" fill="#C8C8C8" stroke="#505050" stroke-width="1.4"/><g fill="#C8C8C8" stroke="#505050"><circle cx="2" cy="2" r="1.3"/><circle cx="8" cy="2" r="1.3"/><circle cx="8" cy="8" r="1.3"/><circle cx="15" cy="8" r="1.3"/><circle cx="15" cy="15" r="1.3"/><circle cx="2" cy="15" r="1.3"/></g></svg>
<div class="a" style="left:86px;top:316px;width:121px;height:16px;overflow:hidden"><div class="ti" style="left:0;top:1px">Эскиз:3</div></div>
<div class="dot" style="left:50px;top:344px;width:12px"></div>
<svg class="a" style="left:63px;top:336px" width="17" height="17"><path d="M2 2h6v6h7v7H2z" fill="#C8C8C8" stroke="#505050" stroke-width="1.4"/><g fill="#C8C8C8" stroke="#505050"><circle cx="2" cy="2" r="1.3"/><circle cx="8" cy="2" r="1.3"/><circle cx="8" cy="8" r="1.3"/><circle cx="15" cy="8" r="1.3"/><circle cx="15" cy="15" r="1.3"/><circle cx="2" cy="15" r="1.3"/></g></svg>
<div class="a" style="left:86px;top:336px;width:121px;height:16px;overflow:hidden"><div class="ti" style="left:0;top:1px">(-) Эскиз:4</div></div>
<div class="a" style="left:92px;top:354px;width:114px;height:20px;background:#F0F0F0"></div>
<div class="dot" style="left:50px;top:364px;width:12px"></div>
<svg class="a" style="left:61px;top:360px" width="9" height="9"><path d="M1 1l7 7M8 1L1 8" stroke="#000" stroke-width="2"/></svg>
<svg class="a" style="left:71px;top:356px" width="17" height="17"><path d="M5 1.5H15.5V11.5H5z" fill="#6E6E6E" stroke="#303030"/><path d="M1 5.5L5 1.5V11.5L1 15.5Z" fill="#C4C4C4" stroke="#303030"/><path d="M11.5 5.5L15.5 1.5V11.5L11.5 15.5Z" fill="#B4B4B4" stroke="#303030"/></svg>
<div class="a" style="left:94px;top:356px;width:113px;height:16px;overflow:hidden"><div class="ti" style="left:0;top:1px">Поверхность выдавливания:1</div></div>
<div class="dot" style="left:50px;top:384px;width:12px"></div>
<svg class="a" style="left:61px;top:380px" width="9" height="9"><path d="M1 1l7 7M8 1L1 8" stroke="#000" stroke-width="2"/></svg>
<svg class="a" style="left:71px;top:376px" width="17" height="17"><g fill="#D0D0D0" stroke="#909090"><circle cx="3" cy="3" r="1.8"/><circle cx="8" cy="3" r="1.8"/><circle cx="13" cy="3" r="1.8"/><circle cx="3" cy="8" r="1.8"/><circle cx="8" cy="8" r="1.8"/><circle cx="13" cy="8" r="1.8"/><circle cx="3" cy="13" r="1.8"/><circle cx="8" cy="13" r="1.8"/><circle cx="13" cy="13" r="1.8"/></g></svg>
<div class="a" style="left:94px;top:376px;width:113px;height:16px;overflow:hidden"><div class="ti" style="left:0;top:1px">Массив по сетке:1</div></div>
<div class="dot" style="left:50px;top:404px;width:12px"></div>
<svg class="a" style="left:63px;top:396px" width="17" height="17"><path d="M5 1.5H15.5V11.5H5z" fill="#6E6E6E" stroke="#303030"/><path d="M1 5.5L5 1.5V11.5L1 15.5Z" fill="#C4C4C4" stroke="#303030"/><path d="M11.5 5.5L15.5 1.5V11.5L11.5 15.5Z" fill="#B4B4B4" stroke="#303030"/></svg>
<div class="a" style="left:86px;top:396px;width:121px;height:16px;overflow:hidden"><div class="ti" style="left:0;top:1px">Поверхность выдавливания:2</div></div>
<div class="dot" style="left:50px;top:424px;width:12px"></div>
<svg class="a" style="left:61px;top:420px" width="9" height="9"><path d="M1 1l7 7M8 1L1 8" stroke="#000" stroke-width="2"/></svg>
<svg class="a" style="left:71px;top:416px" width="17" height="17"><path d="M1 5L6 1.5 15 5 13 9 15.5 12 10 16 2 12Z" fill="#D4D4D4" stroke="#8A8A8A"/><path d="M3 7l6 2 4 4M6 2l2 4 5 1" stroke="#9A9A9A" fill="none"/><path d="M8 9l5 4-3 2z" fill="#A8A8A8"/></svg>
<div class="a" style="left:94px;top:416px;width:113px;height:16px;overflow:hidden"><div class="ti" style="left:0;top:1px">Кривая пересечения:1</div></div>
<div class="dot" style="left:50px;top:444px;width:12px"></div>
<svg class="a" style="left:61px;top:440px" width="9" height="9"><path d="M1 1l7 7M8 1L1 8" stroke="#000" stroke-width="2"/></svg>
<svg class="a" style="left:71px;top:436px" width="17" height="17"><g fill="#D0D0D0" stroke="#909090"><circle cx="3" cy="3" r="1.8"/><circle cx="8" cy="3" r="1.8"/><circle cx="13" cy="3" r="1.8"/><circle cx="3" cy="8" r="1.8"/><circle cx="8" cy="8" r="1.8"/><circle cx="13" cy="8" r="1.8"/><circle cx="3" cy="13" r="1.8"/><circle cx="8" cy="13" r="1.8"/><circle cx="13" cy="13" r="1.8"/></g></svg>
<div class="a" style="left:94px;top:436px;width:113px;height:16px;overflow:hidden"><div class="ti" style="left:0;top:1px">Массив по сетке:2</div></div>
<div class="dot" style="left:50px;top:464px;width:12px"></div>
<svg class="a" style="left:61px;top:460px" width="9" height="9"><path d="M1 1l7 7M8 1L1 8" stroke="#000" stroke-width="2"/></svg>
<svg class="a" style="left:71px;top:456px" width="17" height="17"><path d="M1 5L6 1.5 15 5 13 9 15.5 12 10 16 2 12Z" fill="#D4D4D4" stroke="#8A8A8A"/><path d="M3 7l6 2 4 4M6 2l2 4 5 1" stroke="#9A9A9A" fill="none"/><path d="M8 9l5 4-3 2z" fill="#A8A8A8"/></svg>
<div class="a" style="left:94px;top:456px;width:113px;height:16px;overflow:hidden"><div class="ti" style="left:0;top:1px">Кривая пересечения:2</div></div>
<div class="dot" style="left:50px;top:484px;width:12px"></div>
<svg class="a" style="left:61px;top:480px" width="9" height="9"><path d="M1 1l7 7M8 1L1 8" stroke="#000" stroke-width="2"/></svg>
<svg class="a" style="left:71px;top:476px" width="17" height="17"><path d="M1 5L6 1.5 15 5 13 9 15.5 12 10 16 2 12Z" fill="#D4D4D4" stroke="#8A8A8A"/><path d="M3 7l6 2 4 4M6 2l2 4 5 1" stroke="#9A9A9A" fill="none"/><path d="M8 9l5 4-3 2z" fill="#A8A8A8"/></svg>
<div class="a" style="left:94px;top:476px;width:113px;height:16px;overflow:hidden"><div class="ti" style="left:0;top:1px">Кривая пересечения:3</div></div>
<div class="dot" style="left:50px;top:504px;width:12px"></div>
<svg class="a" style="left:63px;top:496px" width="17" height="17"><path d="M3 14L14 3" stroke="#2030E0" stroke-width="1.1"/><rect x="1.5" y="12.5" width="3" height="3" fill="#fff" stroke="#2030E0"/><rect x="12.5" y="1.5" width="3" height="3" fill="#fff" stroke="#2030E0"/></svg>
<div class="a" style="left:86px;top:496px;width:121px;height:16px;overflow:hidden"><div class="ti" style="left:0;top:1px">Отрезок:3</div></div>
<div class="dot" style="left:50px;top:524px;width:12px"></div>
<svg class="a" style="left:63px;top:516px" width="17" height="17"><path d="M3 14L14 3" stroke="#2030E0" stroke-width="1.1"/><rect x="1.5" y="12.5" width="3" height="3" fill="#fff" stroke="#2030E0"/><rect x="12.5" y="1.5" width="3" height="3" fill="#fff" stroke="#2030E0"/></svg>
<div class="a" style="left:86px;top:516px;width:121px;height:16px;overflow:hidden"><div class="ti" style="left:0;top:1px">Отрезок:4</div></div>
<div class="dot" style="left:50px;top:544px;width:12px"></div>
<svg class="a" style="left:63px;top:536px" width="17" height="17"><path d="M1.5 4.5L11 1 16.5 10 6 16.5Z" fill="#58C8F8"/><path d="M4 5.5L10.5 3.5 13.5 10 7 13Z" fill="#00F4FF"/><path d="M0.5 6L16 3M2 12.5L17 9M4.5 0.5L8 17M10.5 0.5L14 16" stroke="#0A1A90" stroke-width="1.1"/></svg>
<div class="a" style="left:86px;top:536px;width:121px;height:16px;overflow:hidden"><div class="ti" style="left:0;top:1px">Заплатка:1</div></div>
<div class="dot" style="left:50px;top:564px;width:12px"></div>
<svg class="a" style="left:63px;top:556px" width="17" height="17"><path d="M1.5 4.5L11 1 16.5 10 6 16.5Z" fill="#58C8F8"/><path d="M4 5.5L10.5 3.5 13.5 10 7 13Z" fill="#00F4FF"/><path d="M0.5 6L16 3M2 12.5L17 9M4.5 0.5L8 17M10.5 0.5L14 16" stroke="#0A1A90" stroke-width="1.1"/></svg>
<div class="a" style="left:86px;top:556px;width:121px;height:16px;overflow:hidden"><div class="ti" style="left:0;top:1px">Заплатка:2</div></div>
<div class="dot" style="left:50px;top:584px;width:12px"></div>
<svg class="a" style="left:63px;top:576px" width="17" height="17"><path d="M1.5 4.5L11 1 16.5 10 6 16.5Z" fill="#58C8F8"/><path d="M4 5.5L10.5 3.5 13.5 10 7 13Z" fill="#00F4FF"/><path d="M0.5 6L16 3M2 12.5L17 9M4.5 0.5L8 17M10.5 0.5L14 16" stroke="#0A1A90" stroke-width="1.1"/></svg>
<div class="a" style="left:86px;top:576px;width:121px;height:16px;overflow:hidden"><div class="ti" style="left:0;top:1px">Заплатка:3</div></div>
<div class="dot" style="left:50px;top:604px;width:12px"></div>
<svg class="a" style="left:62px;top:596px" width="6" height="17"><path d="M3 0.5v14" stroke="#000" stroke-width="1.2"/><ellipse cx="3" cy="12" rx="1.8" ry="3" fill="none" stroke="#000"/></svg>
<svg class="a" style="left:63px;top:596px" width="17" height="17"><path d="M7 3Q7 1 10 1H16V8Q14 9 16 10V16H10Q7 16 7 14Z" fill="#2060E0"/><path d="M8 7H15V11H8z" fill="#20E0F0"/><path d="M9 9h1M12 9h1" stroke="#0A1A60"/></svg>
<div class="a" style="left:86px;top:596px;width:121px;height:16px;overflow:hidden"><div class="ti" style="left:0;top:1px">Сшивка поверхностей:1</div></div>
<div class="dot" style="left:50px;top:624px;width:12px"></div>
<svg class="a" style="left:60px;top:617px" width="9" height="13"><path d="M2.5 6V3.5a2 2 0 0 1 4 0V6" stroke="#404040" stroke-width="1.3" fill="none"/><rect x="1" y="6" width="7" height="6" rx="1.5" fill="#404040"/><rect x="4" y="8" width="1" height="2" fill="#fff"/></svg>
<svg class="a" style="left:71px;top:616px" width="17" height="17"><path d="M1 4l6-2 9 2v8l-9 3-6-2z" fill="#8A8A8A" stroke="#404040"/><path d="M6 1v15M1 8l15 0" stroke="#303030" stroke-width="1.2"/></svg>
<div class="a" style="left:94px;top:616px;width:113px;height:16px;overflow:hidden"><div class="ti" style="left:0;top:1px">Перпендикулярная плоскость:1</div></div>
<div class="dot" style="left:50px;top:644px;width:12px"></div>
<svg class="a" style="left:60px;top:637px" width="9" height="13"><path d="M2.5 6V3.5a2 2 0 0 1 4 0V6" stroke="#404040" stroke-width="1.3" fill="none"/><rect x="1" y="6" width="7" height="6" rx="1.5" fill="#404040"/><rect x="4" y="8" width="1" height="2" fill="#fff"/></svg>
<svg class="a" style="left:71px;top:636px" width="17" height="17"><path d="M2 2h6v6h7v7H2z" fill="#C8C8C8" stroke="#505050" stroke-width="1.4"/><g fill="#C8C8C8" stroke="#505050"><circle cx="2" cy="2" r="1.3"/><circle cx="8" cy="2" r="1.3"/><circle cx="8" cy="8" r="1.3"/><circle cx="15" cy="8" r="1.3"/><circle cx="15" cy="15" r="1.3"/><circle cx="2" cy="15" r="1.3"/></g></svg>
<div class="a" style="left:94px;top:636px;width:113px;height:16px;overflow:hidden"><div class="ti" style="left:0;top:1px">(-) Эскиз:5</div></div>
<div class="dot" style="left:50px;top:664px;width:12px"></div>
<svg class="a" style="left:60px;top:657px" width="9" height="13"><path d="M2.5 6V3.5a2 2 0 0 1 4 0V6" stroke="#404040" stroke-width="1.3" fill="none"/><rect x="1" y="6" width="7" height="6" rx="1.5" fill="#404040"/><rect x="4" y="8" width="1" height="2" fill="#fff"/></svg>
<svg class="a" style="left:71px;top:656px" width="17" height="17"><path d="M1 10l4-3h10l-3 4z" fill="#9A9A9A" stroke="#404040"/><path d="M3 5c3-4 9-4 12-2v7h-4c0-3-4-3-6 0z" fill="#7A7A7A" stroke="#404040"/><path d="M1 10v5h11l3-4" fill="#808080" stroke="#404040"/></svg>
<div class="a" style="left:94px;top:656px;width:113px;height:16px;overflow:hidden"><div class="ti" style="left:0;top:1px">Вырезать кинематически:1</div></div>
<svg class="a" style="left:42px;top:609px" width="158" height="9"><path d="M4 1.5H152L156 4.5 152 7.5H4L1 4.5Z" fill="#F4F4F4" stroke="#8A8A8A"/><path d="M5 4.5H151" stroke="#A0A0A0"/></svg>
<!-- VIEWPORT -->
<div class="a" style="left:233px;top:124px;width:1217px;height:2px;background:#6A6A6A"></div>
<div class="a" style="left:233px;top:124px;width:2px;height:826px;background:#6A6A6A"></div>
<div class="a" style="left:235px;top:126px;width:1215px;height:823px;background:linear-gradient(#68A4E2,#FFFFFF)"></div>
<svg class="a" style="left:0;top:0" width="1450" height="1040" viewBox="0 0 1450 1040">
<defs><linearGradient id="rg" gradientUnits="userSpaceOnUse" x1="720" y1="340" x2="660" y2="690"><stop offset="0" stop-color="#A00000"/><stop offset="0.12" stop-color="#B60000"/><stop offset="0.45" stop-color="#BC0000"/><stop offset="0.75" stop-color="#980000"/><stop offset="1" stop-color="#680000"/></linearGradient>
<linearGradient id="rg2" gradientUnits="userSpaceOnUse" x1="1000" y1="470" x2="960" y2="700"><stop offset="0" stop-color="#9A0000"/><stop offset="0.12" stop-color="#AE0000"/><stop offset="0.45" stop-color="#B20000"/><stop offset="0.75" stop-color="#900000"/><stop offset="1" stop-color="#660000"/></linearGradient></defs>
<path d="M593.0,646.0 C593.0,640.8 592.8,626.0 593.0,615.0 C593.2,604.0 592.7,591.7 594.0,580.0 C595.3,568.3 598.0,556.7 601.0,545.0 C604.0,533.3 608.3,521.8 612.0,510.0 C615.7,498.2 619.0,485.8 623.0,474.0 C627.0,462.2 631.5,450.7 636.0,439.0 C640.5,427.3 645.4,414.7 650.0,404.0 C654.6,393.3 659.1,383.4 663.6,375.0 C668.1,366.6 672.0,359.6 677.0,353.5 C682.0,347.4 689.8,342.0 693.8,338.6 C697.8,335.2 698.8,334.3 701.0,333.0 C703.2,331.7 706.0,331.3 707.0,331.0 L1126.0,505.0 L1114.0,506.0 L1108.8,516.0 L1102.5,527.7 L1090.3,548.4 L1081.0,567.5 L1074.0,592.0 L1067.5,616.7 L1063.0,642.0 L1060.5,667.0 L1061.0,689.0 L1061.7,707.8 Z" fill="url(#rg)"/>
<path d="M593.0,646.0 C593.0,640.8 592.8,626.0 593.0,615.0 C593.2,604.0 592.7,591.7 594.0,580.0 C595.3,568.3 598.0,556.7 601.0,545.0 C604.0,533.3 608.3,521.8 612.0,510.0 C615.7,498.2 619.0,485.8 623.0,474.0 C627.0,462.2 631.5,450.7 636.0,439.0 C640.5,427.3 645.4,414.7 650.0,404.0 C654.6,393.3 659.1,383.4 663.6,375.0 C668.1,366.6 672.0,359.6 677.0,353.5 C682.0,347.4 689.8,342.0 693.8,338.6 C697.8,335.2 698.8,334.3 701.0,333.0 C703.2,331.7 706.0,331.3 707.0,331.0 L1126.0,505.0 L1114.0,506.0 L1108.8,516.0 L1102.5,527.7 L1090.3,548.4 L1081.0,567.5 L1074.0,592.0 L1067.5,616.7 L1063.0,642.0 L1060.5,667.0 L1061.0,689.0 L1061.7,707.8 Z" fill="url(#rg2)" opacity="0.15"/>
<path d="M693.8,338.6 L701.0,333.0 L707.0,331.0 L1126.0,505.0 L1114.0,506.0 L1108.8,516.0 L1108.8,516.0 L1087.2,507.8 L1065.6,499.6 L1044.0,491.4 L1022.4,483.3 L1000.8,475.1 L979.3,467.0 L957.7,458.8 L936.1,450.7 L914.5,442.5 L892.9,434.4 L871.3,426.3 L849.7,418.2 L828.1,410.1 L806.5,402.0 L785.0,393.9 L763.4,385.8 L741.8,377.7 L720.2,369.6 L698.6,361.6 L677.0,353.5 Z" fill="#9C0000" opacity="0.55"/>
<path d="M593.0,615.0 C596.9,615.7 608.6,617.6 616.4,618.9 C624.2,620.2 632.0,621.5 639.8,622.8 C647.6,624.1 655.4,625.4 663.2,626.7 C671.0,628.0 678.8,629.2 686.6,630.5 C694.4,631.8 702.2,633.1 710.0,634.3 C717.8,635.6 725.6,636.9 733.4,638.1 C741.2,639.4 749.0,640.7 756.8,641.9 C764.6,643.2 772.4,644.4 780.2,645.7 C788.0,646.9 795.8,648.2 803.6,649.4 C811.4,650.6 819.2,651.9 827.0,653.1 C834.8,654.3 842.6,655.6 850.4,656.8 C858.2,658.0 866.0,659.2 873.8,660.5 C881.6,661.7 889.4,662.9 897.2,664.1 C905.0,665.3 912.8,666.5 920.6,667.7 C928.4,668.9 936.2,670.1 944.0,671.3 C951.8,672.5 959.6,673.7 967.4,674.9 C975.2,676.1 983.0,677.3 990.8,678.5 C998.6,679.6 1006.4,680.8 1014.2,682.0 C1022.0,683.2 1029.8,684.3 1037.6,685.5 C1045.4,686.7 1057.1,688.4 1061.0,689.0" fill="none" stroke="#22DCF2" stroke-width="1" shape-rendering="crispEdges"/>
<path d="M594.0,580.0 C597.9,580.8 609.6,583.0 617.3,584.5 C625.1,586.0 632.9,587.5 640.6,589.0 C648.4,590.5 656.2,592.0 664.0,593.5 C671.8,595.0 679.5,596.5 687.3,597.9 C695.1,599.4 702.9,600.9 710.6,602.4 C718.4,603.9 726.2,605.3 734.0,606.8 C741.7,608.3 749.5,609.8 757.3,611.2 C765.0,612.7 772.8,614.2 780.6,615.6 C788.4,617.1 796.1,618.5 803.9,620.0 C811.7,621.5 819.5,622.9 827.2,624.4 C835.0,625.8 842.8,627.3 850.6,628.7 C858.4,630.1 866.1,631.6 873.9,633.0 C881.7,634.5 889.5,635.9 897.2,637.3 C905.0,638.8 912.8,640.2 920.5,641.6 C928.3,643.0 936.1,644.5 943.9,645.9 C951.6,647.3 959.4,648.7 967.2,650.1 C975.0,651.6 982.8,653.0 990.5,654.4 C998.3,655.8 1006.1,657.2 1013.9,658.6 C1021.6,660.0 1029.4,661.4 1037.2,662.8 C1045.0,664.2 1056.6,666.3 1060.5,667.0" fill="none" stroke="#22DCF2" stroke-width="1" shape-rendering="crispEdges"/>
<path d="M601.0,545.0 C604.9,545.8 616.4,548.2 624.1,549.8 C631.8,551.4 639.5,553.0 647.2,554.6 C654.9,556.2 662.6,557.8 670.3,559.5 C678.0,561.1 685.7,562.7 693.4,564.3 C701.1,565.9 708.8,567.5 716.5,569.1 C724.2,570.7 731.9,572.3 739.6,573.9 C747.3,575.6 755.0,577.2 762.7,578.8 C770.4,580.4 778.1,582.0 785.8,583.6 C793.5,585.2 801.2,586.9 808.9,588.5 C816.6,590.1 824.3,591.7 832.0,593.3 C839.7,594.9 847.4,596.6 855.1,598.2 C862.8,599.8 870.5,601.4 878.2,603.0 C885.9,604.6 893.6,606.3 901.3,607.9 C909.0,609.5 916.7,611.1 924.4,612.7 C932.1,614.4 939.8,616.0 947.5,617.6 C955.2,619.2 962.9,620.9 970.6,622.5 C978.3,624.1 986.0,625.7 993.7,627.4 C1001.4,629.0 1009.1,630.6 1016.8,632.2 C1024.5,633.9 1032.2,635.5 1039.9,637.1 C1047.6,638.7 1059.2,641.2 1063.0,642.0" fill="none" stroke="#22DCF2" stroke-width="1" shape-rendering="crispEdges"/>
<path d="M612.0,510.0 C615.8,510.9 627.2,513.5 634.8,515.3 C642.4,517.1 650.0,518.8 657.5,520.6 C665.1,522.4 672.7,524.1 680.3,525.9 C687.9,527.7 695.5,529.4 703.1,531.2 C710.7,533.0 718.3,534.7 725.9,536.5 C733.5,538.3 741.1,540.0 748.6,541.8 C756.2,543.6 763.8,545.4 771.4,547.1 C779.0,548.9 786.6,550.7 794.2,552.5 C801.8,554.2 809.4,556.0 817.0,557.8 C824.6,559.6 832.2,561.3 839.8,563.1 C847.3,564.9 854.9,566.7 862.5,568.5 C870.1,570.2 877.7,572.0 885.3,573.8 C892.9,575.6 900.5,577.4 908.1,579.1 C915.7,580.9 923.3,582.7 930.8,584.5 C938.4,586.3 946.0,588.1 953.6,589.9 C961.2,591.6 968.8,593.4 976.4,595.2 C984.0,597.0 991.6,598.8 999.2,600.6 C1006.8,602.4 1014.4,604.2 1022.0,605.9 C1029.5,607.7 1037.1,609.5 1044.7,611.3 C1052.3,613.1 1063.7,615.8 1067.5,616.7" fill="none" stroke="#22DCF2" stroke-width="1" shape-rendering="crispEdges"/>
<path d="M623.0,474.0 C626.8,475.0 638.0,477.8 645.5,479.7 C653.1,481.6 660.6,483.5 668.1,485.5 C675.6,487.4 683.1,489.3 690.6,491.2 C698.2,493.1 705.7,495.1 713.2,497.0 C720.7,498.9 728.2,500.8 735.8,502.8 C743.3,504.7 750.8,506.7 758.3,508.6 C765.8,510.5 773.3,512.5 780.9,514.4 C788.4,516.4 795.9,518.3 803.4,520.3 C810.9,522.2 818.4,524.2 826.0,526.2 C833.5,528.1 841.0,530.1 848.5,532.0 C856.0,534.0 863.5,536.0 871.0,538.0 C878.6,539.9 886.1,541.9 893.6,543.9 C901.1,545.9 908.6,547.8 916.2,549.8 C923.7,551.8 931.2,553.8 938.7,555.8 C946.2,557.8 953.7,559.8 961.2,561.8 C968.8,563.8 976.3,565.8 983.8,567.8 C991.3,569.8 998.8,571.8 1006.3,573.8 C1013.9,575.8 1021.4,577.8 1028.9,579.9 C1036.4,581.9 1043.9,583.9 1051.5,585.9 C1059.0,587.9 1070.2,591.0 1074.0,592.0" fill="none" stroke="#22DCF2" stroke-width="1" shape-rendering="crispEdges"/>
<path d="M636.0,439.0 C639.7,440.1 650.8,443.3 658.2,445.4 C665.7,447.5 673.1,449.7 680.5,451.8 C687.9,453.9 695.3,456.1 702.8,458.2 C710.2,460.3 717.6,462.5 725.0,464.6 C732.4,466.7 739.8,468.9 747.2,471.0 C754.7,473.2 762.1,475.3 769.5,477.4 C776.9,479.6 784.3,481.7 791.8,483.9 C799.2,486.0 806.6,488.1 814.0,490.3 C821.4,492.4 828.8,494.5 836.2,496.7 C843.7,498.8 851.1,501.0 858.5,503.1 C865.9,505.3 873.3,507.4 880.8,509.5 C888.2,511.7 895.6,513.8 903.0,516.0 C910.4,518.1 917.8,520.3 925.2,522.4 C932.7,524.5 940.1,526.7 947.5,528.8 C954.9,531.0 962.3,533.1 969.8,535.3 C977.2,537.4 984.6,539.6 992.0,541.7 C999.4,543.9 1006.8,546.0 1014.2,548.2 C1021.7,550.3 1029.1,552.5 1036.5,554.6 C1043.9,556.7 1051.3,558.9 1058.8,561.0 C1066.2,563.2 1077.3,566.4 1081.0,567.5" fill="none" stroke="#22DCF2" stroke-width="1" shape-rendering="crispEdges"/>
<path d="M650.0,404.0 C653.7,405.2 664.7,408.8 672.0,411.3 C679.4,413.7 686.7,416.1 694.0,418.5 C701.4,421.0 708.7,423.4 716.0,425.8 C723.4,428.2 730.7,430.6 738.1,433.0 C745.4,435.5 752.7,437.9 760.1,440.3 C767.4,442.7 774.8,445.1 782.1,447.5 C789.4,450.0 796.8,452.4 804.1,454.8 C811.4,457.2 818.8,459.6 826.1,462.0 C833.5,464.4 840.8,466.8 848.1,469.2 C855.5,471.6 862.8,474.1 870.1,476.5 C877.5,478.9 884.8,481.3 892.2,483.7 C899.5,486.1 906.8,488.5 914.2,490.9 C921.5,493.3 928.9,495.7 936.2,498.1 C943.5,500.5 950.9,502.9 958.2,505.3 C965.5,507.7 972.9,510.1 980.2,512.5 C987.6,514.9 994.9,517.3 1002.2,519.7 C1009.6,522.1 1016.9,524.5 1024.3,526.9 C1031.6,529.3 1038.9,531.7 1046.3,534.1 C1053.6,536.4 1060.9,538.8 1068.3,541.2 C1075.6,543.6 1086.6,547.2 1090.3,548.4" fill="none" stroke="#22DCF2" stroke-width="1" shape-rendering="crispEdges"/>
<path d="M663.6,375.0 C667.3,376.3 678.2,380.0 685.5,382.5 C692.9,385.1 700.2,387.6 707.5,390.1 C714.8,392.6 722.1,395.2 729.4,397.7 C736.8,400.2 744.1,402.7 751.4,405.3 C758.7,407.8 766.0,410.3 773.3,412.8 C780.6,415.4 788.0,417.9 795.3,420.4 C802.6,423.0 809.9,425.5 817.2,428.0 C824.5,430.6 831.8,433.1 839.2,435.6 C846.5,438.2 853.8,440.7 861.1,443.3 C868.4,445.8 875.7,448.4 883.0,450.9 C890.4,453.4 897.7,456.0 905.0,458.5 C912.3,461.1 919.6,463.6 926.9,466.2 C934.3,468.7 941.6,471.3 948.9,473.8 C956.2,476.4 963.5,479.0 970.8,481.5 C978.1,484.1 985.5,486.6 992.8,489.2 C1000.1,491.7 1007.4,494.3 1014.7,496.9 C1022.0,499.4 1029.3,502.0 1036.7,504.6 C1044.0,507.1 1051.3,509.7 1058.6,512.3 C1065.9,514.8 1073.2,517.4 1080.6,520.0 C1087.9,522.6 1098.8,526.4 1102.5,527.7" fill="none" stroke="#22DCF2" stroke-width="1" shape-rendering="crispEdges"/>
<path d="M677.0,353.5 C680.6,354.8 691.4,358.9 698.6,361.6 C705.8,364.2 713.0,366.9 720.2,369.6 C727.4,372.3 734.6,375.0 741.8,377.7 C749.0,380.4 756.2,383.1 763.4,385.8 C770.6,388.5 777.8,391.2 785.0,393.9 C792.1,396.6 799.3,399.3 806.5,402.0 C813.7,404.6 820.9,407.3 828.1,410.1 C835.3,412.8 842.5,415.5 849.7,418.2 C856.9,420.9 864.1,423.6 871.3,426.3 C878.5,429.0 885.7,431.7 892.9,434.4 C900.1,437.1 907.3,439.8 914.5,442.5 C921.7,445.2 928.9,447.9 936.1,450.7 C943.3,453.4 950.5,456.1 957.7,458.8 C964.9,461.5 972.1,464.2 979.3,467.0 C986.5,469.7 993.7,472.4 1000.8,475.1 C1008.0,477.8 1015.2,480.5 1022.4,483.3 C1029.6,486.0 1036.8,488.7 1044.0,491.4 C1051.2,494.2 1058.4,496.9 1065.6,499.6 C1072.8,502.3 1080.0,505.1 1087.2,507.8 C1094.4,510.5 1105.2,514.6 1108.8,516.0" fill="none" stroke="#22DCF2" stroke-width="1" shape-rendering="crispEdges"/>
<path d="M693.8,338.6 C697.3,340.0 707.8,344.2 714.8,347.0 C721.8,349.8 728.8,352.6 735.8,355.4 C742.8,358.2 749.8,361.0 756.8,363.8 C763.8,366.6 770.8,369.4 777.8,372.2 C784.8,375.0 791.8,377.8 798.8,380.6 C805.9,383.4 812.9,386.2 819.9,388.9 C826.9,391.7 833.9,394.5 840.9,397.3 C847.9,400.1 854.9,402.9 861.9,405.7 C868.9,408.5 875.9,411.3 882.9,414.1 C889.9,416.9 896.9,419.7 903.9,422.4 C910.9,425.2 917.9,428.0 924.9,430.8 C931.9,433.6 938.9,436.4 945.9,439.2 C952.9,442.0 959.9,444.8 966.9,447.5 C973.9,450.3 980.9,453.1 987.9,455.9 C994.9,458.7 1001.9,461.5 1009.0,464.3 C1016.0,467.0 1023.0,469.8 1030.0,472.6 C1037.0,475.4 1044.0,478.2 1051.0,481.0 C1058.0,483.7 1065.0,486.5 1072.0,489.3 C1079.0,492.1 1086.0,494.9 1093.0,497.7 C1100.0,500.4 1110.5,504.6 1114.0,506.0" fill="none" stroke="#22DCF2" stroke-width="1" shape-rendering="crispEdges"/>
<path d="M626.5,651.1 L626.4,620.6 L627.3,586.4 L634.0,551.9 L644.5,517.6 L655.2,482.2 L667.8,448.1 L681.5,414.4 L695.0,385.8 L707.8,365.0 L723.8,350.6" fill="none" stroke="#22DCF2" stroke-width="1" shape-rendering="crispEdges"/>
<path d="M723.8,350.6 L727.3,357.8" fill="none" stroke="#22DCF2" stroke-width="1" shape-rendering="crispEdges"/>
<path d="M626.5,651.1 L626.5,635.8" fill="none" stroke="#E8D8F2" stroke-width="1" shape-rendering="crispEdges"/>
<path d="M660.0,656.1 L659.9,626.1 L660.6,592.8 L667.0,558.8 L677.1,525.1 L687.4,490.4 L699.6,457.3 L712.9,424.8 L726.3,396.6 L738.7,376.5 L753.8,362.6" fill="none" stroke="#22DCF2" stroke-width="1" shape-rendering="crispEdges"/>
<path d="M753.8,362.6 L757.3,370.3" fill="none" stroke="#22DCF2" stroke-width="1" shape-rendering="crispEdges"/>
<path d="M660.0,656.1 L659.9,641.1" fill="none" stroke="#E8D8F2" stroke-width="1" shape-rendering="crispEdges"/>
<path d="M693.4,661.0 L693.3,631.6 L694.0,599.2 L700.0,565.7 L709.6,532.7 L719.6,498.6 L731.4,466.4 L744.4,435.1 L757.6,407.4 L769.5,388.1 L783.8,374.6" fill="none" stroke="#22DCF2" stroke-width="1" shape-rendering="crispEdges"/>
<path d="M783.8,374.6 L787.3,382.8" fill="none" stroke="#22DCF2" stroke-width="1" shape-rendering="crispEdges"/>
<path d="M693.4,661.0 L693.4,646.3" fill="none" stroke="#E8D8F2" stroke-width="1" shape-rendering="crispEdges"/>
<path d="M726.9,665.8 L726.7,637.0 L727.3,605.6 L733.0,572.6 L742.1,540.3 L751.9,506.9 L763.1,475.6 L775.8,445.5 L789.0,418.3 L800.4,399.6 L813.9,386.5" fill="none" stroke="#22DCF2" stroke-width="1" shape-rendering="crispEdges"/>
<path d="M813.9,386.5 L817.4,395.4" fill="none" stroke="#22DCF2" stroke-width="1" shape-rendering="crispEdges"/>
<path d="M726.9,665.8 L726.8,651.4" fill="none" stroke="#E8D8F2" stroke-width="1" shape-rendering="crispEdges"/>
<path d="M760.4,670.4 L760.1,642.4 L760.6,611.9 L766.0,579.5 L774.7,547.9 L784.1,515.3 L794.9,484.8 L807.2,455.8 L820.4,429.1 L831.2,411.2 L843.9,398.5" fill="none" stroke="#22DCF2" stroke-width="1" shape-rendering="crispEdges"/>
<path d="M843.9,398.5 L847.4,407.9" fill="none" stroke="#22DCF2" stroke-width="1" shape-rendering="crispEdges"/>
<path d="M760.4,670.4 L760.3,656.4" fill="none" stroke="#E8D8F2" stroke-width="1" shape-rendering="crispEdges"/>
<path d="M793.9,675.0 L793.6,647.8 L793.9,618.1 L799.0,586.4 L807.2,555.5 L816.3,523.6 L826.7,493.9 L838.7,466.1 L851.7,440.0 L862.1,422.8 L873.9,410.5" fill="none" stroke="#22DCF2" stroke-width="1" shape-rendering="crispEdges"/>
<path d="M873.9,410.5 L877.4,420.4" fill="none" stroke="#22DCF2" stroke-width="1" shape-rendering="crispEdges"/>
<path d="M793.9,675.0 L793.7,661.4" fill="none" stroke="#E8D8F2" stroke-width="1" shape-rendering="crispEdges"/>
<path d="M827.4,679.5 L827.0,653.1 L827.2,624.4 L832.0,593.3 L839.8,563.1 L848.5,532.0 L858.5,503.1 L870.1,476.5 L883.0,450.9 L892.9,434.4 L903.9,422.4" fill="none" stroke="#22DCF2" stroke-width="1" shape-rendering="crispEdges"/>
<path d="M903.9,422.4 L907.4,432.9" fill="none" stroke="#22DCF2" stroke-width="1" shape-rendering="crispEdges"/>
<path d="M827.4,679.5 L827.2,666.3" fill="none" stroke="#E8D8F2" stroke-width="1" shape-rendering="crispEdges"/>
<path d="M860.8,683.8 L860.4,658.4 L860.6,630.5 L865.0,600.3 L872.3,570.8 L880.7,540.5 L890.3,512.3 L901.6,486.8 L914.4,461.8 L923.7,446.0 L933.9,434.4" fill="none" stroke="#22DCF2" stroke-width="1" shape-rendering="crispEdges"/>
<path d="M933.9,434.4 L937.4,445.4" fill="none" stroke="#22DCF2" stroke-width="1" shape-rendering="crispEdges"/>
<path d="M860.8,683.8 L860.6,671.1" fill="none" stroke="#E8D8F2" stroke-width="1" shape-rendering="crispEdges"/>
<path d="M894.3,688.1 L893.9,663.6 L893.9,636.7 L898.0,607.2 L904.8,578.4 L912.9,549.0 L922.1,521.5 L933.0,497.1 L945.8,472.7 L954.6,457.6 L963.9,446.4" fill="none" stroke="#22DCF2" stroke-width="1" shape-rendering="crispEdges"/>
<path d="M963.9,446.4 L967.4,457.9" fill="none" stroke="#22DCF2" stroke-width="1" shape-rendering="crispEdges"/>
<path d="M894.3,688.1 L894.1,675.8" fill="none" stroke="#E8D8F2" stroke-width="1" shape-rendering="crispEdges"/>
<path d="M927.8,692.2 L927.3,668.8 L927.2,642.8 L931.0,614.1 L937.4,586.0 L945.1,557.5 L953.9,530.7 L964.5,507.4 L977.1,483.7 L985.4,469.3 L993.9,458.3" fill="none" stroke="#22DCF2" stroke-width="1" shape-rendering="crispEdges"/>
<path d="M993.9,458.3 L997.4,470.5" fill="none" stroke="#22DCF2" stroke-width="1" shape-rendering="crispEdges"/>
<path d="M927.8,692.2 L927.5,680.5" fill="none" stroke="#E8D8F2" stroke-width="1" shape-rendering="crispEdges"/>
<path d="M961.3,696.3 L960.7,673.9 L960.5,648.9 L964.0,621.1 L969.9,593.7 L977.4,566.1 L985.6,539.9 L995.9,517.6 L1008.5,494.7 L1016.3,480.9 L1024.0,470.2" fill="none" stroke="#22DCF2" stroke-width="1" shape-rendering="crispEdges"/>
<path d="M1024.0,470.2 L1027.5,483.0" fill="none" stroke="#22DCF2" stroke-width="1" shape-rendering="crispEdges"/>
<path d="M961.3,696.3 L961.0,685.1" fill="none" stroke="#E8D8F2" stroke-width="1" shape-rendering="crispEdges"/>
<path d="M994.7,700.2 L994.1,679.0 L993.9,655.0 L997.0,628.1 L1002.4,601.3 L1009.6,574.7 L1017.4,549.1 L1027.4,527.9 L1039.8,505.7 L1047.1,492.6 L1054.0,482.2" fill="none" stroke="#22DCF2" stroke-width="1" shape-rendering="crispEdges"/>
<path d="M1054.0,482.2 L1057.5,495.5" fill="none" stroke="#22DCF2" stroke-width="1" shape-rendering="crispEdges"/>
<path d="M994.7,700.2 L994.4,689.6" fill="none" stroke="#E8D8F2" stroke-width="1" shape-rendering="crispEdges"/>
<path d="M1028.2,704.1 L1027.6,684.0 L1027.2,661.0 L1030.0,635.0 L1035.0,609.0 L1041.8,583.3 L1049.2,558.3 L1058.8,538.2 L1071.2,516.7 L1078.0,504.3 L1084.0,494.1" fill="none" stroke="#22DCF2" stroke-width="1" shape-rendering="crispEdges"/>
<path d="M1084.0,494.1 L1087.5,508.0" fill="none" stroke="#22DCF2" stroke-width="1" shape-rendering="crispEdges"/>
<path d="M1028.2,704.1 L1027.9,694.0" fill="none" stroke="#E8D8F2" stroke-width="1" shape-rendering="crispEdges"/>
<path d="M707.0,331.0 L1126.0,505.0" stroke="#000" stroke-width="1.2" stroke-dasharray="2 2" opacity="0.8"/>
<path d="M703.0,334.5 L1120.0,510.0" stroke="#22DCF2" stroke-width="0.8" stroke-dasharray="1 3" opacity="0.8"/>
<path d="M735.0,360.0 L1109.0,516.0" stroke="#FF2A2A" stroke-width="1.1"/>
<path d="M735,361.3 L1109,517.3" stroke="#22DCF2" stroke-width="1"/>
<path d="M714.0,334.0 Q721.6,337.7 722.8,350.6" fill="none" stroke="#22DCF2" stroke-width="1" shape-rendering="crispEdges" opacity="0.85"/>
<path d="M724.8,350.6 Q750.6,350.3 752.8,362.6" fill="none" stroke="#22DCF2" stroke-width="1" shape-rendering="crispEdges" opacity="0.85"/>
<path d="M754.8,362.6 Q780.5,362.7 782.8,374.6" fill="none" stroke="#22DCF2" stroke-width="1" shape-rendering="crispEdges" opacity="0.85"/>
<path d="M784.8,374.6 Q810.5,375.1 812.9,386.5" fill="none" stroke="#22DCF2" stroke-width="1" shape-rendering="crispEdges" opacity="0.85"/>
<path d="M814.9,386.5 Q840.4,387.5 842.9,398.5" fill="none" stroke="#22DCF2" stroke-width="1" shape-rendering="crispEdges" opacity="0.85"/>
<path d="M844.9,398.5 Q870.3,399.9 872.9,410.5" fill="none" stroke="#22DCF2" stroke-width="1" shape-rendering="crispEdges" opacity="0.85"/>
<path d="M874.9,410.5 Q900.3,412.3 902.9,422.4" fill="none" stroke="#22DCF2" stroke-width="1" shape-rendering="crispEdges" opacity="0.85"/>
<path d="M904.9,422.4 Q930.2,424.6 932.9,434.4" fill="none" stroke="#22DCF2" stroke-width="1" shape-rendering="crispEdges" opacity="0.85"/>
<path d="M934.9,434.4 Q960.1,437.0 962.9,446.4" fill="none" stroke="#22DCF2" stroke-width="1" shape-rendering="crispEdges" opacity="0.85"/>
<path d="M964.9,446.4 Q990.1,449.4 992.9,458.3" fill="none" stroke="#22DCF2" stroke-width="1" shape-rendering="crispEdges" opacity="0.85"/>
<path d="M994.9,458.3 Q1020.0,461.8 1023.0,470.2" fill="none" stroke="#22DCF2" stroke-width="1" shape-rendering="crispEdges" opacity="0.85"/>
<path d="M1025.0,470.2 Q1050.0,474.2 1053.0,482.2" fill="none" stroke="#22DCF2" stroke-width="1" shape-rendering="crispEdges" opacity="0.85"/>
<path d="M1055.0,482.2 Q1079.9,486.5 1083.0,494.1" fill="none" stroke="#22DCF2" stroke-width="1" shape-rendering="crispEdges" opacity="0.85"/>
<path d="M1085.0,494.1 Q1109.8,498.9 1113.0,506.0" fill="none" stroke="#22DCF2" stroke-width="1" shape-rendering="crispEdges" opacity="0.85"/>
<path d="M593.0,646.0 L1061.7,707.8" stroke="#22DCF2" stroke-width="1.2"/>
<path d="M593.0,646.0 L1061.7,707.8" stroke="#FF1010" stroke-width="1.4" stroke-dasharray="3 3"/>
<path d="M593.0,646.0 C593.0,640.8 592.8,626.0 593.0,615.0 C593.2,604.0 592.7,591.7 594.0,580.0 C595.3,568.3 598.0,556.7 601.0,545.0 C604.0,533.3 608.3,521.8 612.0,510.0 C615.7,498.2 619.0,485.8 623.0,474.0 C627.0,462.2 631.5,450.7 636.0,439.0 C640.5,427.3 645.4,414.7 650.0,404.0 C654.6,393.3 659.1,383.4 663.6,375.0 C668.1,366.6 672.0,359.6 677.0,353.5 C682.0,347.4 689.8,342.0 693.8,338.6 C697.8,335.2 698.8,334.3 701.0,333.0 C703.2,331.7 706.0,331.3 707.0,331.0" fill="none" stroke="#22DCF2" stroke-width="1"/>
<path d="M593.0,646.0 C593.0,640.8 592.8,626.0 593.0,615.0 C593.2,604.0 592.7,591.7 594.0,580.0 C595.3,568.3 598.0,556.7 601.0,545.0 C604.0,533.3 608.3,521.8 612.0,510.0 C615.7,498.2 619.0,485.8 623.0,474.0 C627.0,462.2 631.5,450.7 636.0,439.0 C640.5,427.3 645.4,414.7 650.0,404.0 C654.6,393.3 659.1,383.4 663.6,375.0 C668.1,366.6 672.0,359.6 677.0,353.5 C682.0,347.4 689.8,342.0 693.8,338.6 C697.8,335.2 698.8,334.3 701.0,333.0 C703.2,331.7 706.0,331.3 707.0,331.0" fill="none" stroke="#FF1010" stroke-width="1.3" stroke-dasharray="2 2"/>
<path d="M1061.7,707.8 L1061.0,689.0 L1060.5,667.0 L1063.0,642.0 L1067.5,616.7 L1074.0,592.0 L1081.0,567.5 L1090.3,548.4 L1102.5,527.7 L1108.8,516.0 L1114.0,506.0 L1120,505.5 Q1135,503 1141,512 Q1147,522 1146.5,534 Z" fill="#0054A8"/>
<path d="M1061.7,707.8 L1146.5,534" stroke="#0A28F0" stroke-width="1.5"/>
<path d="M1061.7,707.8 C1061.6,704.7 1061.2,695.8 1061.0,689.0 C1060.8,682.2 1060.2,674.8 1060.5,667.0 C1060.8,659.2 1061.8,650.4 1063.0,642.0 C1064.2,633.6 1065.7,625.0 1067.5,616.7 C1069.3,608.4 1071.8,600.2 1074.0,592.0 C1076.2,583.8 1078.3,574.8 1081.0,567.5 C1083.7,560.2 1086.7,555.0 1090.3,548.4 C1093.9,541.8 1099.4,533.1 1102.5,527.7 C1105.6,522.3 1106.9,519.6 1108.8,516.0 C1110.7,512.4 1113.1,507.7 1114.0,506.0" fill="none" stroke="#22DCF2" stroke-width="1"/>
<path d="M1061.7,707.8 C1061.6,704.7 1061.2,695.8 1061.0,689.0 C1060.8,682.2 1060.2,674.8 1060.5,667.0 C1060.8,659.2 1061.8,650.4 1063.0,642.0 C1064.2,633.6 1065.7,625.0 1067.5,616.7 C1069.3,608.4 1071.8,600.2 1074.0,592.0 C1076.2,583.8 1078.3,574.8 1081.0,567.5 C1083.7,560.2 1086.7,555.0 1090.3,548.4 C1093.9,541.8 1099.4,533.1 1102.5,527.7 C1105.6,522.3 1106.9,519.6 1108.8,516.0 C1110.7,512.4 1113.1,507.7 1114.0,506.0" fill="none" stroke="#FF1010" stroke-width="1" stroke-dasharray="3 3" transform="translate(-1.5,0)"/>
<path d="M1114,506 Q1135,503 1141,512 Q1147,522 1146.5,534" fill="none" stroke="#FF2020" stroke-width="1.2"/>
<path d="M1112,518 L1146,534" stroke="#FF3030" stroke-width="1"/><path d="M1110,516 L1146,532" stroke="#22DCF2" stroke-width="1"/>
<path d="M1096,540 L1145,536" stroke="#2A9DF4" stroke-width="1"/>
<path d="M1069,612 L1105,622" stroke="#2A9DF4" stroke-width="1" shape-rendering="crispEdges"/>
<path d="M734,358 L593,646" stroke="#1010C8" stroke-width="1.3"/>
<path d="M688,363 L715,506 L633,677 L604,530 Z" fill="none" stroke="#22DCF2" stroke-width="1" shape-rendering="crispEdges"/>
<path d="M1132,465 L1158,610 L1076,777 L1051,635 Z" fill="none" stroke="#2A9DF4" stroke-width="1" shape-rendering="crispEdges"/>
<path d="M1040,514 L1249,562 L1168,729 L959,677 Z" fill="none" stroke="#FF7272" stroke-width="1" shape-rendering="crispEdges"/>
<path d="M988,526 L1196,572.5 L1221,717 L1012,670.6 Z" fill="none" stroke="#94F000" stroke-width="1" shape-rendering="crispEdges"/>
<path d="M1104,622 L1108,646" fill="none" stroke="#FF7272" stroke-width="1" shape-rendering="crispEdges"/><path d="M1091,650 L1104,623" stroke="#80F010" stroke-width="1" shape-rendering="crispEdges"/>
<text x="588" y="603" font-family="Liberation Sans" font-size="11" fill="#E0F0FF" stroke="#202020" stroke-width="0.4">U</text>
<text x="661" y="656" font-family="Liberation Sans" font-size="11" fill="#F0F0FF">V</text>
<path d="M586,610 Q590,630 592,640" stroke="#5A1010" fill="none"/>
<circle cx="592" cy="648" r="2.5" fill="none" stroke="#D04040"/><circle cx="596" cy="648" r="2.5" fill="none" stroke="#D04040"/>
<path d="M638,654 L652,655" stroke="#F0E0F0" stroke-width="1.5"/>
<path d="M305,874 L268,864" stroke="#70A8F0" stroke-width="3.5"/><path d="M255,863 L272,860 L268,869 Z" fill="#6898E8"/>
<text x="244" y="866" font-family="Liberation Serif" font-size="11" fill="#4080F0">Z</text>
<path d="M306,877 L290,905" stroke="#70C870" stroke-width="3.5"/><path d="M287,916 L284,902 L295,905 Z" fill="#80D880"/>
<text x="280" y="927" font-family="Liberation Serif" font-size="11" fill="#40B040">Y</text>
<path d="M308,877 L312,900" stroke="#E88080" stroke-width="3.5"/><path d="M314,909 L308,898 L317,898 Z" fill="#D87070"/>
<text x="309" y="920" font-family="Liberation Serif" font-size="11" fill="#F03030">X</text>
<circle cx="307" cy="875" r="6.5" fill="#F0F080" stroke="#D8D060" stroke-width="0.8"/><circle cx="305.5" cy="873" r="2.5" fill="#FFFFE0"/>
</svg>

<!-- BOTTOM PANEL -->
<div class="a" style="left:0;top:949px;width:1450px;height:4px;background:linear-gradient(#E8ECF2,#F6F8FC)"></div>
<div class="a" style="left:233px;top:949px;width:1217px;height:1px;background:#DADADA"></div>
<div class="a" style="left:26px;top:953px;width:1424px;height:1px;background:#9A9A9A"></div>
<div class="a" style="left:0;top:954px;width:1450px;height:67px;background:#E3E6EA"></div>
<div class="a" style="left:27px;top:958px;width:3px;height:60px;background:repeating-linear-gradient(#A8ACB2 0 2px,transparent 2px 4px)"></div>
<div class="a" style="left:32px;top:961px;width:48px;height:58px;background:linear-gradient(90deg,#FFFFFF,#F2F4F6 50%,#E4E7EB)"></div>
<svg class="a" style="left:36px;top:966px" width="17" height="12"><path d="M15 1v6H5" stroke="#1010D0" stroke-width="1.3" fill="none"/><path d="M1 7l6-4v8z" fill="#1010D0"/></svg>
<svg class="a" style="left:57px;top:964px" width="18" height="18"><path d="M5.5 1h7l4.5 4.5v7L12.5 17h-7L1 12.5v-7z" fill="#E8101A"/><text x="2.2" y="11.6" font-family="Liberation Sans" font-size="5.6" font-weight="bold" fill="#fff">STOP</text></svg>
<svg class="a" style="left:37px;top:988px" width="14" height="14"><rect x="0.7" y="0.7" width="12.6" height="12.6" fill="#fff" stroke="#000" stroke-width="1.4"/><path d="M7 1v3M7 10v3M1 7h3M10 7h3" stroke="#000" stroke-width="1.4"/></svg>
<svg class="a" style="left:59px;top:987px" width="14" height="16"><path d="M1 1h12v11H9l2 3-4-3H1z" fill="#D0E8F8" stroke="#000" stroke-width="1.2"/><text x="3.8" y="10" font-family="Liberation Sans" font-size="10" font-weight="bold" fill="#102080">?</text></svg>
<!-- param strip -->
<div class="a" style="left:79px;top:961px;width:1371px;height:35px;background:linear-gradient(#FFFFFF,#F6F7F9 50%,#E8EBEF);border-top:1px solid #9A9A9A;border-bottom:1px solid #8A8A8A;border-left:1px solid #9A9A9A"></div>
<div class="t" style="left:98px;top:971px;font-size:11px"><u>П</u>оверхность</div>
<div class="a" style="left:169px;top:968px;width:96px;height:20px;background:#EFEFEF;border:1px solid #A3A3A3;overflow:hidden"><div class="t" style="left:4px;top:2px;font-size:11px">Грань.Поверхность</div></div>
<div class="a" style="left:266px;top:965px;width:130px;height:26px;background:linear-gradient(#FFD56E,#FFE892);border:1px solid #3D9BFF"></div>
<div class="t" style="left:268px;top:971px;font-size:11px">Количество, <u>U</u></div>
<div class="a" style="left:346px;top:968px;width:48px;height:20px;background:#fff;border:1px solid #ACACAC"></div>
<div class="t" style="left:351px;top:971px;font-size:11px">15</div>
<div class="a" style="left:378px;top:969px;width:15px;height:18px;background:#F4F4F4;border-left:1px solid #C8C8C8"></div>
<div class="a" style="left:379px;top:977px;width:14px;height:1px;background:#C8C8C8"></div>
<div class="a" style="left:382px;top:971px;width:0;height:0;border-left:3.5px solid transparent;border-right:3.5px solid transparent;border-bottom:4px solid #000"></div>
<div class="a" style="left:382px;top:981px;width:0;height:0;border-left:3.5px solid transparent;border-right:3.5px solid transparent;border-top:4px solid #000"></div>
<div class="t" style="left:397px;top:971px;font-size:11px">Количество, <u>V</u></div>
<div class="a" style="left:474px;top:968px;width:48px;height:20px;background:#fff;border:1px solid #ACACAC"></div>
<div class="t" style="left:479px;top:971px;font-size:11px">15</div>
<div class="a" style="left:506px;top:969px;width:15px;height:18px;background:#F4F4F4;border-left:1px solid #C8C8C8"></div>
<div class="a" style="left:507px;top:977px;width:14px;height:1px;background:#C8C8C8"></div>
<div class="a" style="left:510px;top:971px;width:0;height:0;border-left:3.5px solid transparent;border-right:3.5px solid transparent;border-bottom:4px solid #000"></div>
<div class="a" style="left:510px;top:981px;width:0;height:0;border-left:3.5px solid transparent;border-right:3.5px solid transparent;border-top:4px solid #000"></div>
<div class="t" style="left:525px;top:971px;font-size:11px"><u>Г</u>раницы</div>
<div class="a" style="left:574px;top:968px;width:20px;height:20px;background:#FFE9A0;border:1px solid #E6B448"></div>
<svg class="a" style="left:577px;top:971px" width="14" height="14"><rect x="0.5" y="0.5" width="13" height="13" fill="#70C8F8" stroke="#0A10E0" stroke-width="1.3"/><path d="M4.8 1v12M9.2 1v12M1 4.8h12M1 9.2h12" stroke="#0A10E0" stroke-width="1.3"/></svg>
<div class="a" style="left:596px;top:968px;width:20px;height:20px;background:#F2F2F2;border:1px solid #B8B8B8"></div>
<svg class="a" style="left:599px;top:971px" width="14" height="14"><rect x="1" y="1" width="12" height="12" fill="#80D0F8"/><path d="M4.8 0v14M9.2 0v14M0 4.8h14M0 9.2h14" stroke="#0A10E0" stroke-width="1.5"/></svg>
<div class="a" style="left:620px;top:970px;width:1px;height:16px;background:#A8A8A8"></div>
<div class="a" style="left:624px;top:970px;width:14px;height:15px;background:#BCD8F4;border:1px solid #9AA4B0"></div>
<div class="t" style="left:640px;top:971px;font-size:11px"><u>Р</u>ассыпать</div>
<!-- tabs -->
<div class="a" style="left:82px;top:995px;width:83px;height:21px;background:#fff;border:1px solid #B4B4B4;border-top:none;border-radius:0 0 3px 3px"></div>
<svg class="a" style="left:85px;top:998px" width="17" height="14"><path d="M1 7L8 1L16 6.5L9 13Z" fill="#80D0F8" stroke="#1030E0" stroke-width="1.2"/><path d="M2.8 5.5L10.8 11.4M3.0 8.5L10.0 2.4M4.5 4.0L12.5 9.8M5.0 10.0L12.0 3.8M6.2 2.5L14.2 8.1M7.0 11.5L14.0 5.1" stroke="#1030E0" stroke-width="0.8"/></svg>
<div class="t" style="left:103px;top:1000px;font-size:11px">Параметры</div>
<svg class="a" style="left:171px;top:998px" width="17" height="15"><path d="M1 1h6l5 4-4 4z" fill="#B8B8B8" stroke="#333" stroke-width="0.8"/><path d="M1 1v3" stroke="#1010A0" stroke-width="2"/><rect x="4" y="5" width="11" height="9" fill="#fff" stroke="#000" stroke-width="1.1"/><path d="M6 8h2M9 8h5M6 11h2M9 11h5" stroke="#000"/></svg>
<div class="t" style="left:189px;top:1000px;font-size:11px;color:#222">Свойства</div>
<!-- STATUS -->
<div class="a" style="left:0;top:1021px;width:1450px;height:1px;background:#8E949C"></div>
<div class="a" style="left:0;top:1022px;width:1450px;height:18px;background:linear-gradient(#E8EBEF,#DDE0E4 40%,#C8CCD2)"></div>
<div class="t" style="left:6px;top:1025px;font-size:11px;color:#1A1A1A">Построение группы изопараметрических кривых на поверхности</div>
<!-- TOOLTIP -->
<div class="a" style="left:25px;top:787px;width:341px;height:67px;border-radius:4px;background:rgba(0,0,0,0.18);filter:blur(1.5px)"></div>
<div class="a" style="left:23px;top:785px;width:341px;height:66px;border:1px solid #767676;border-radius:3px;background:linear-gradient(#FFFFFF,#F2F2F8 50%,#E4E4EE)"></div>
<svg class="a" style="left:28px;top:788px" width="17" height="15"><path d="M1 7.5L8 1L16 7L9 14Z" fill="#60C0F8" stroke="#1030E0" stroke-width="1.2"/><path d="M2.8 5.9L10.8 12.2M3.0 9.1L10.0 2.5M4.5 4.2L12.5 10.5M5.0 10.8L12.0 4.0M6.2 2.6L14.2 8.8M7.0 12.4L14.0 5.5" stroke="#1030E0" stroke-width="0.8"/></svg>
<div class="t" style="left:50px;top:788px;font-size:11.75px;font-weight:bold;color:#333">Группа изопараметрических кривых на поверхности</div>
<div class="t" style="left:50px;top:807px;font-size:11px;color:#404040">Построение группы</div>
<div class="t" style="left:50px;top:820px;font-size:11px;color:#404040">изопараметрических кривых на</div>
<div class="t" style="left:50px;top:833px;font-size:11px;color:#404040">поверхности</div>
</body></html>
